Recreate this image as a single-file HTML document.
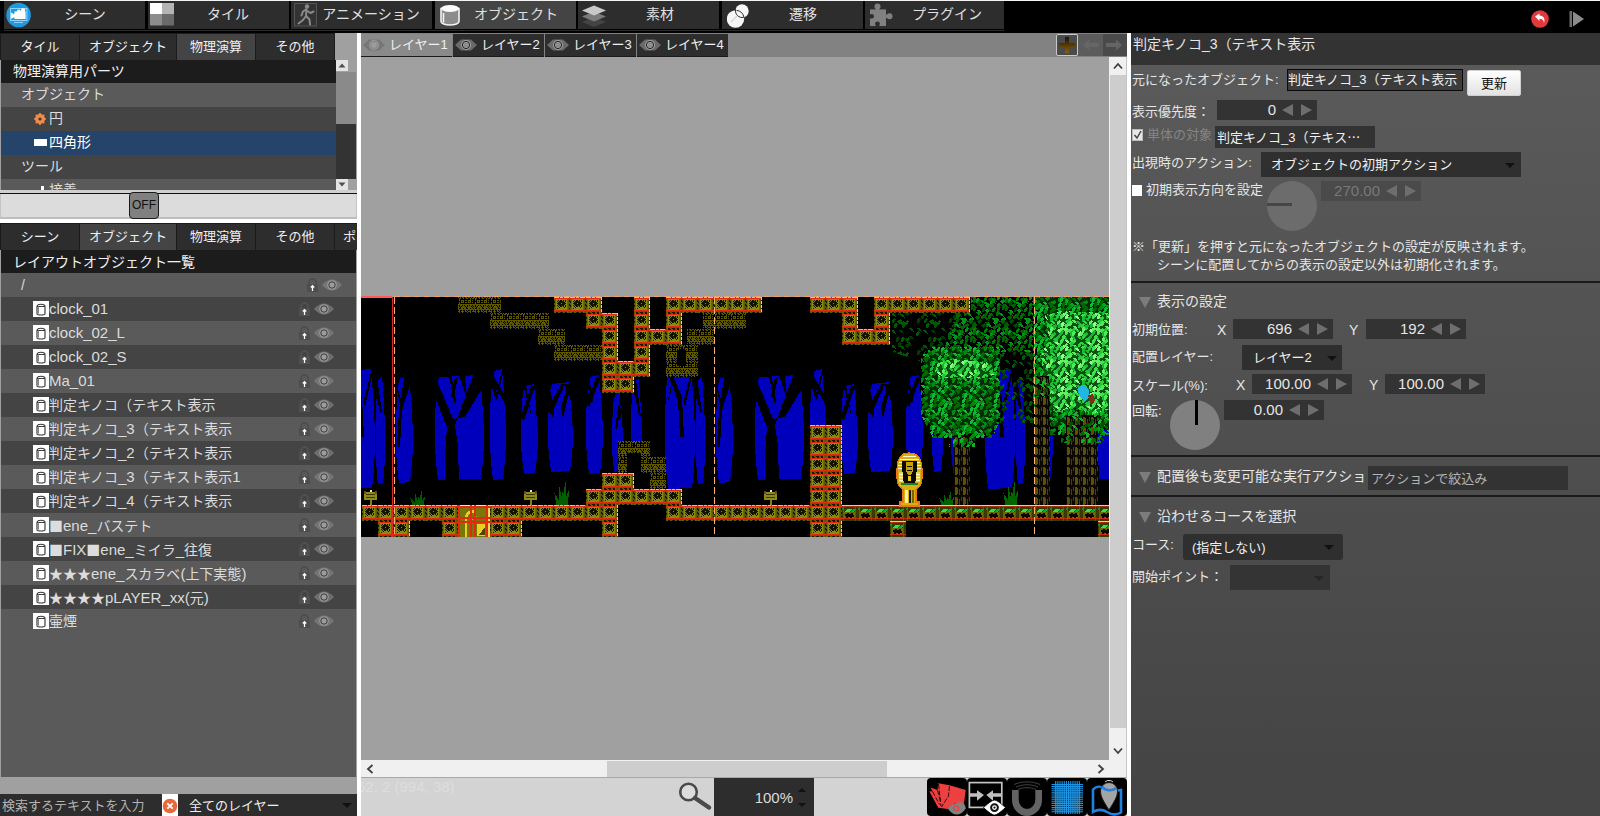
<!DOCTYPE html>
<html lang="ja"><head><meta charset="utf-8"><title>Scene Editor</title>
<style>
*{box-sizing:border-box;margin:0;padding:0}
html,body{width:1600px;height:816px;overflow:hidden;background:#000}
body{position:relative;font-family:"Liberation Sans","Noto Sans CJK JP",sans-serif;font-size:13px;color:#e6e6e6;line-height:1}
.a{position:absolute}
.t{position:absolute;white-space:nowrap;line-height:20px;height:20px}
/* top bar */
.tt{position:absolute;top:1px;height:28px;width:141px;background:#2d2d2d;font-size:14px;line-height:27px;color:#e0e0e0}
.tt.sel{background:#444}
.tt span{position:absolute;top:0;white-space:nowrap;transform:translateX(-50%)}
.tt svg{position:absolute}
/* sub tabs */
.st{position:absolute;height:26px;background:#2d2d2d;font-size:13px;line-height:25px;text-align:center;color:#f0f0f0;border-right:1px solid #1c1c1c;white-space:nowrap;overflow:hidden}
.st.sel{background:#444}
.row{position:absolute;left:1px;width:355px;height:24px;font-size:14px;line-height:24px;color:#dcdcdc;white-space:nowrap;overflow:hidden}
.r0{background:#5a5a5a}.r1{background:#444}
.row .ic{position:absolute;left:32px;top:4px;width:16px;height:16px;background:#fff}
.row .nm{position:absolute;left:48px;top:0}
.row .nm b{font-weight:normal;font-size:15px}
.row .nm s,.cj{text-decoration:none;font-family:"Noto Sans CJK JP",sans-serif}
.lk{position:absolute;top:5px;width:11px;height:14px}
.ey{position:absolute;top:6px;width:20px;height:12px}
.sp{position:absolute;height:20px;width:100px;background:#333;font-size:15px;line-height:20px;color:#e6e6e6}
.sp i{position:absolute;right:41px;top:0;font-style:normal}
.sp b{position:absolute;top:4px;width:0;height:0;border-top:6px solid transparent;border-bottom:6px solid transparent}
.sp b.l{right:24px;border-right:11px solid #6e6e6e}
.sp b.r{right:5px;border-left:11px solid #6e6e6e}
.dd{position:absolute;background:#2f2f2f;color:#f0f0f0;font-size:13px;white-space:nowrap}
.dd u{position:absolute;right:7px;top:50%;margin-top:-2px;width:0;height:0;border-left:5px solid transparent;border-right:5px solid transparent;border-top:5px solid #111}
.hl{position:absolute;left:1131px;width:469px;height:2px;background:#1a1a1a}
.sec{position:absolute;left:1157px;font-size:14px;line-height:20px;height:20px;white-space:nowrap;color:#e6e6e6}
.tri{position:absolute;left:1139px;width:0;height:0;border-left:6.5px solid transparent;border-right:6.5px solid transparent;border-top:11px solid #7c7c7c}
.ltab{position:absolute;top:34px;height:23px;width:91px;background:#2d2d2d;font-size:13px;line-height:21px;color:#f0f0f0;border-bottom:1px solid #1a1a1a}
.ltab.sel{background:#8a8a8a}
.ltab span{position:absolute;left:28px;top:0;white-space:nowrap}
.ltab svg{position:absolute;left:2px;top:4px}
.bb{position:absolute;top:778px;height:38px;width:40px;background:#000;border-radius:4px}
</style></head><body>
<div class="a" style="left:0;top:0;width:1600px;height:33px;background:#000"></div>
<div class="a" style="left:4px;top:30px;width:1000px;height:1px;background:#2a2a2a"></div>
<div class="a" style="left:0;top:0;width:1600px;height:1px;background:#f4f4f4"></div>
<div class="tt" style="left:4px"><svg width="26" height="26" style="left:2px;top:1px" viewBox="0 0 26 26"><circle cx="12.600" cy="13" r="12.300" fill="#1e9be0"/><rect x="4.600" y="6.500" width="16.300" height="12" fill="none" stroke="#8fd4ff" stroke-width="1"/><path d="M8 20.500h9" stroke="#8fd4ff" stroke-width="1"/><path d="M8.400 9.500h11.200v7.500h-11.200zM4.800 10.500l3.900 2v2.500l-3.900 2z" fill="#fff"/><circle cx="12.800" cy="9.300" r="1.900" fill="#fff"/><circle cx="17" cy="8.500" r="2.200" fill="#fff"/></svg><span style="left:81px">シーン</span></div>
<div class="tt" style="left:148px"><svg width="24" height="23" style="left:2px;top:2px" viewBox="0 0 24 23"><rect x="0" y="0" width="12" height="11" fill="#fff"/><rect x="12" y="0" width="12" height="11" fill="#b4b4b4"/><rect x="0" y="11" width="12" height="11.500" fill="#8c8c8c"/><rect x="12" y="11" width="12" height="11.500" fill="#6a6a6a"/></svg><span style="left:80px">タイル</span></div>
<div class="tt" style="left:291px"><svg width="24" height="24" style="left:3px;top:2px" viewBox="0 0 24 24"><rect x="0.500" y="0.500" width="22" height="22.500" fill="#333" stroke="#555" stroke-width="1"/><circle cx="13" cy="3.500" r="2.200" fill="#8a8a8a"/><path d="M12.500 6l-3.500 2.500-1.500 4M12.500 6.500l-.5 6.500 3.500 3.500.5 5M12 13l-3 4-4.500 3.500M12.500 7.500l4 2.500 3-1.500" fill="none" stroke="#8a8a8a" stroke-width="2" stroke-linecap="round" stroke-linejoin="round"/></svg><span style="left:80px">アニメーション</span></div>
<div class="tt sel" style="left:435px"><svg width="20" height="22" style="left:5px;top:3px" viewBox="0 0 20 22"><path d="M1 4.500v13c0 2 4 3.500 9 3.500s9-1.500 9-3.500v-13z" fill="#8c8c8c" stroke="#f4f4f4" stroke-width="1.600"/><ellipse cx="10" cy="4.500" rx="9" ry="3.500" fill="#fafafa"/><path d="M3.500 9v9.500" stroke="#f4f4f4" stroke-width="1.500"/></svg><span style="left:81px">オブジェクト</span></div>
<div class="tt" style="left:578px"><svg width="26" height="24" style="left:3px;top:3px" viewBox="0 0 26 24"><path d="M13 13l12 5-12 5L1 18z" fill="#444"/><path d="M13 7.500l12 5-12 5L1 12.500z" fill="#7a7a7a"/><path d="M13 1.500l12 5-12 5L1 6.500z" fill="#c8c8c8"/></svg><span style="left:82px">素材</span></div>
<div class="tt" style="left:722px"><svg width="28" height="26" style="left:5px;top:2px" viewBox="0 0 28 26"><circle cx="8.500" cy="16" r="8.700" fill="#f6f6f6"/><circle cx="15" cy="8" r="6.700" fill="#f6f6f6"/><path d="M8.600 6.500a6.700 6.700 0 0 0 8.200 7.800M9.500 7.400a8.700 8.700 0 0 1 7.500 7" fill="none" stroke="#2a2a2a" stroke-width="1"/><path d="M4 19l6-6" stroke="#d8d8d8" stroke-width="1.500"/></svg><span style="left:81px">遷移</span></div>
<div class="tt" style="left:865px;width:139px"><svg width="27" height="26" style="left:3px;top:1px" viewBox="0 0 27 26"><rect x="2" y="7.400" width="16" height="16.600" fill="#808080"/><circle cx="9.500" cy="4.500" r="3" fill="#808080"/><rect x="8" y="5" width="3" height="3" fill="#808080"/><circle cx="21.500" cy="14.300" r="3" fill="#808080"/><rect x="17" y="12.800" width="3" height="3" fill="#808080"/><circle cx="3.600" cy="14.300" r="2.400" fill="#2d2d2d"/><circle cx="9.500" cy="22" r="2.400" fill="#2d2d2d"/><rect x="8.300" y="22.500" width="2.400" height="2" fill="#2d2d2d"/><rect x="1.500" y="13.200" width="1.500" height="2.200" fill="#2d2d2d"/></svg><span style="left:82px">プラグイン</span></div>
<svg class="a" style="left:1530px;top:9px" width="20" height="20" viewBox="0 0 20 20"><circle cx="10" cy="10" r="8.800" fill="#e23a3a"/><path d="M5 7.500l4.500-3v2c4 .3 6 3 4.500 7.500-.3-3-1.800-4.300-4.500-4.300v2.300z" fill="#fff"/></svg>
<svg class="a" style="left:1568px;top:9px" width="18" height="20" viewBox="0 0 18 20"><rect x="1.500" y="2" width="2.500" height="16" fill="#6e6e6e"/><path d="M5 2.500l11 7.500-11 7.500z" fill="#8c8c8c"/></svg>
<div class="a" style="left:0;top:33px;width:357px;height:783px;background:#a0a0a0"></div>
<div class="a" style="left:0;top:33px;width:335px;height:27px;background:#1c1c1c"></div>
<div class="st" style="left:1px;top:34px;width:79px;height:26px">タイル</div>
<div class="st" style="left:80px;top:34px;width:97px;height:26px">オブジェクト</div>
<div class="st sel" style="left:177px;top:34px;width:79px;height:26px">物理演算</div>
<div class="st" style="left:256px;top:34px;width:79px;height:26px">その他</div>
<div class="a" style="left:1px;top:60px;width:335px;line-height:23px;height:130px;overflow:hidden;background:#5a5a5a">
<div class="row" style="left:0;top:0;width:335px;line-height:23px;background:#1c1c1c;color:#f0f0f0"><span class="a" style="left:12px">物理演算用パーツ</span></div>
<div class="row r0" style="left:0;top:23px;width:335px;line-height:23px"><span class="a" style="left:20px">オブジェクト</span></div>
<div class="row r1" style="left:0;top:47px;width:335px;line-height:23px"><svg class="a" style="left:33px;top:6px" width="12" height="12" viewBox="0 0 12 12"><circle cx="6" cy="6" r="5" fill="#f08c46"/><path d="M6 0v12M0 6h12M1.800 1.800l8.400 8.400M10.200 1.800l-8.400 8.400" stroke="#f08c46" stroke-width="1.600"/><circle cx="6" cy="6" r="1.600" fill="#3a3a3a"/></svg><span class="a" style="left:48px">円</span></div>
<div class="row" style="left:0;top:71px;width:335px;line-height:23px;background:#24446a;color:#fff"><i class="a" style="left:33px;top:8px;width:13px;height:7px;background:#fff"></i><span class="a" style="left:48px">四角形</span></div>
<div class="row r1" style="left:0;top:95px;width:335px;line-height:23px"><span class="a" style="left:20px">ツール</span></div>
<div class="row r0" style="left:0;top:119px;width:335px;line-height:23px"><i class="a" style="left:40px;top:7px;width:3px;height:4px;background:#fff"></i><span class="a" style="left:48px">接着</span></div>
</div>
<div class="a" style="left:336px;top:60px;width:20px;height:130px;background:#333"></div>
<div class="a" style="left:336px;top:60px;width:20px;height:12px;background:#a0a0a0"></div>
<div class="a" style="left:336px;top:72px;width:20px;height:52px;background:#8a8a8a"></div>
<div class="a" style="left:336px;top:179px;width:20px;height:11px;background:#a0a0a0"></div>
<svg class="a" style="left:336px;top:60px" width="12" height="11" viewBox="0 0 12 11"><rect width="12" height="11" fill="#e4e4e4"/><path d="M2.500 7.500h7L6 3.500z" fill="#505050"/></svg>
<svg class="a" style="left:336px;top:179px" width="12" height="11" viewBox="0 0 12 11"><rect width="12" height="11" fill="#e4e4e4"/><path d="M2.500 3.500h7L6 7.500z" fill="#505050"/></svg>
<div class="a" style="left:0;top:190px;width:357px;height:3px;background:#cfcfcf"></div>
<div class="a" style="left:0;top:193px;width:357px;height:1px;background:#111"></div>
<div class="a" style="left:0;top:194px;width:357px;height:25px;background:#dcdcdc;border:1px solid #c4c4c4;border-top:0;border-bottom:2px solid #bdbdbd"></div>
<div class="a" style="left:129px;top:192px;width:30px;height:27px;background:#808080;border:1px solid #1a1a1a;border-radius:4px;color:#111;font-size:12px;line-height:25px;text-align:center">OFF</div>
<div class="a" style="left:0;top:219px;width:357px;height:4px;background:#fff"></div>
<div class="a" style="left:0;top:223px;width:357px;height:27px;background:#1c1c1c"></div>
<div class="st" style="left:1px;top:224px;width:79px;height:26px">シーン</div>
<div class="st sel" style="left:80px;top:224px;width:97px;height:26px">オブジェクト</div>
<div class="st" style="left:177px;top:224px;width:79px;height:26px">物理演算</div>
<div class="st" style="left:256px;top:224px;width:79px;height:26px">その他</div>
<div class="st" style="left:335px;top:224px;width:22px;height:26px;text-align:left;padding-left:8px;border-right:0">ポ</div>
<div class="a" style="left:1px;top:250px;width:355px;height:527px;background:#5a5a5a"></div>
<div class="row" style="top:250px;height:23px;background:#1c1c1c;color:#f0f0f0"><span class="a" style="left:12px">レイアウトオブジェクト一覧</span></div>
<div class="row r0" style="top:273px"><span class="a" style="left:20px">/</span><svg class="lk" style="left:306px" viewBox="0 0 11 14"><path d="M2 6V4.500a3.500 3.500 0 0 1 7 0v1" fill="none" stroke="#4e4e4e" stroke-width="2"/><rect x="0" y="6" width="11" height="8" fill="#4e4e4e"/><path d="M5.500 13V8M3.800 9.500l1.700-1.800 1.700 1.800" stroke="#fff" stroke-width="1.300" fill="none"/></svg><svg class="ey" style="left:321px" viewBox="0 0 20 12"><path d="M0 6Q5 0.500 10 0.500T20 6Q15 11.500 10 11.500T0 6z" fill="#767676"/><circle cx="10" cy="6" r="4.800" fill="#9a9a9a"/><circle cx="10" cy="6" r="3.200" fill="none" stroke="#303030" stroke-width=".9"/><rect x="8.200" y="4.200" width="3.600" height="3.600" fill="#9c9c9c"/></svg></div>
<div class="row r1" style="top:297px"><svg class="ic" viewBox="0 0 16 16"><rect width="16" height="16" fill="#fff"/><path d="M4 5.500c0-3 8-3 8 0M3.500 5.500h9M4 6v6.500c0 2 8 2 8 0V6" fill="none" stroke="#3c3c3c" stroke-width="1.200"/><path d="M5.500 5.500v7" stroke="#888" stroke-width="1"/></svg><span class="nm"><b>clock_01</b></span><svg class="lk" style="left:298px" viewBox="0 0 11 14"><path d="M2 6V4.500a3.500 3.500 0 0 1 7 0v1" fill="none" stroke="#505050" stroke-width="2"/><rect x="0" y="6" width="11" height="8" fill="#505050"/><path d="M5.500 13V8M3.800 9.500l1.700-1.800 1.700 1.800" stroke="#fff" stroke-width="1.300" fill="none"/></svg><svg class="ey" style="left:313px" viewBox="0 0 20 12"><path d="M0 6Q5 0.500 10 0.500T20 6Q15 11.500 10 11.500T0 6z" fill="#6e6e6e"/><circle cx="10" cy="6" r="4.800" fill="#989898"/><circle cx="10" cy="6" r="3.200" fill="none" stroke="#303030" stroke-width=".9"/><rect x="8.200" y="4.200" width="3.600" height="3.600" fill="#9c9c9c"/></svg></div>
<div class="row r0" style="top:321px"><svg class="ic" viewBox="0 0 16 16"><rect width="16" height="16" fill="#fff"/><path d="M4 5.500c0-3 8-3 8 0M3.500 5.500h9M4 6v6.500c0 2 8 2 8 0V6" fill="none" stroke="#3c3c3c" stroke-width="1.200"/><path d="M5.500 5.500v7" stroke="#888" stroke-width="1"/></svg><span class="nm"><b>clock_02_L</b></span><svg class="lk" style="left:298px" viewBox="0 0 11 14"><path d="M2 6V4.500a3.500 3.500 0 0 1 7 0v1" fill="none" stroke="#4e4e4e" stroke-width="2"/><rect x="0" y="6" width="11" height="8" fill="#4e4e4e"/><path d="M5.500 13V8M3.800 9.500l1.700-1.800 1.700 1.800" stroke="#fff" stroke-width="1.300" fill="none"/></svg><svg class="ey" style="left:313px" viewBox="0 0 20 12"><path d="M0 6Q5 0.500 10 0.500T20 6Q15 11.500 10 11.500T0 6z" fill="#767676"/><circle cx="10" cy="6" r="4.800" fill="#989898"/><circle cx="10" cy="6" r="3.200" fill="none" stroke="#303030" stroke-width=".9"/><rect x="8.200" y="4.200" width="3.600" height="3.600" fill="#9c9c9c"/></svg></div>
<div class="row r1" style="top:345px"><svg class="ic" viewBox="0 0 16 16"><rect width="16" height="16" fill="#fff"/><path d="M4 5.500c0-3 8-3 8 0M3.500 5.500h9M4 6v6.500c0 2 8 2 8 0V6" fill="none" stroke="#3c3c3c" stroke-width="1.200"/><path d="M5.500 5.500v7" stroke="#888" stroke-width="1"/></svg><span class="nm"><b>clock_02_S</b></span><svg class="lk" style="left:298px" viewBox="0 0 11 14"><path d="M2 6V4.500a3.500 3.500 0 0 1 7 0v1" fill="none" stroke="#505050" stroke-width="2"/><rect x="0" y="6" width="11" height="8" fill="#505050"/><path d="M5.500 13V8M3.800 9.500l1.700-1.800 1.700 1.800" stroke="#fff" stroke-width="1.300" fill="none"/></svg><svg class="ey" style="left:313px" viewBox="0 0 20 12"><path d="M0 6Q5 0.500 10 0.500T20 6Q15 11.500 10 11.500T0 6z" fill="#6e6e6e"/><circle cx="10" cy="6" r="4.800" fill="#989898"/><circle cx="10" cy="6" r="3.200" fill="none" stroke="#303030" stroke-width=".9"/><rect x="8.200" y="4.200" width="3.600" height="3.600" fill="#9c9c9c"/></svg></div>
<div class="row r0" style="top:369px"><svg class="ic" viewBox="0 0 16 16"><rect width="16" height="16" fill="#fff"/><path d="M4 5.500c0-3 8-3 8 0M3.500 5.500h9M4 6v6.500c0 2 8 2 8 0V6" fill="none" stroke="#3c3c3c" stroke-width="1.200"/><path d="M5.500 5.500v7" stroke="#888" stroke-width="1"/></svg><span class="nm"><b>Ma_01</b></span><svg class="lk" style="left:298px" viewBox="0 0 11 14"><path d="M2 6V4.500a3.500 3.500 0 0 1 7 0v1" fill="none" stroke="#4e4e4e" stroke-width="2"/><rect x="0" y="6" width="11" height="8" fill="#4e4e4e"/><path d="M5.500 13V8M3.800 9.500l1.700-1.800 1.700 1.800" stroke="#fff" stroke-width="1.300" fill="none"/></svg><svg class="ey" style="left:313px" viewBox="0 0 20 12"><path d="M0 6Q5 0.500 10 0.500T20 6Q15 11.500 10 11.500T0 6z" fill="#767676"/><circle cx="10" cy="6" r="4.800" fill="#989898"/><circle cx="10" cy="6" r="3.200" fill="none" stroke="#303030" stroke-width=".9"/><rect x="8.200" y="4.200" width="3.600" height="3.600" fill="#9c9c9c"/></svg></div>
<div class="row r1" style="top:393px"><svg class="ic" viewBox="0 0 16 16"><rect width="16" height="16" fill="#fff"/><path d="M4 5.500c0-3 8-3 8 0M3.500 5.500h9M4 6v6.500c0 2 8 2 8 0V6" fill="none" stroke="#3c3c3c" stroke-width="1.200"/><path d="M5.500 5.500v7" stroke="#888" stroke-width="1"/></svg><span class="nm">判定キノコ（テキスト表示</span><svg class="lk" style="left:298px" viewBox="0 0 11 14"><path d="M2 6V4.500a3.500 3.500 0 0 1 7 0v1" fill="none" stroke="#505050" stroke-width="2"/><rect x="0" y="6" width="11" height="8" fill="#505050"/><path d="M5.500 13V8M3.800 9.500l1.700-1.800 1.700 1.800" stroke="#fff" stroke-width="1.300" fill="none"/></svg><svg class="ey" style="left:313px" viewBox="0 0 20 12"><path d="M0 6Q5 0.500 10 0.500T20 6Q15 11.500 10 11.500T0 6z" fill="#6e6e6e"/><circle cx="10" cy="6" r="4.800" fill="#989898"/><circle cx="10" cy="6" r="3.200" fill="none" stroke="#303030" stroke-width=".9"/><rect x="8.200" y="4.200" width="3.600" height="3.600" fill="#9c9c9c"/></svg></div>
<div class="row r0" style="top:417px"><svg class="ic" viewBox="0 0 16 16"><rect width="16" height="16" fill="#fff"/><path d="M4 5.500c0-3 8-3 8 0M3.500 5.500h9M4 6v6.500c0 2 8 2 8 0V6" fill="none" stroke="#3c3c3c" stroke-width="1.200"/><path d="M5.500 5.500v7" stroke="#888" stroke-width="1"/></svg><span class="nm">判定キノコ<b>_3</b>（テキスト表示</span><svg class="lk" style="left:298px" viewBox="0 0 11 14"><path d="M2 6V4.500a3.500 3.500 0 0 1 7 0v1" fill="none" stroke="#4e4e4e" stroke-width="2"/><rect x="0" y="6" width="11" height="8" fill="#4e4e4e"/><path d="M5.500 13V8M3.800 9.500l1.700-1.800 1.700 1.800" stroke="#fff" stroke-width="1.300" fill="none"/></svg><svg class="ey" style="left:313px" viewBox="0 0 20 12"><path d="M0 6Q5 0.500 10 0.500T20 6Q15 11.500 10 11.500T0 6z" fill="#767676"/><circle cx="10" cy="6" r="4.800" fill="#989898"/><circle cx="10" cy="6" r="3.200" fill="none" stroke="#303030" stroke-width=".9"/><rect x="8.200" y="4.200" width="3.600" height="3.600" fill="#9c9c9c"/></svg></div>
<div class="row r1" style="top:441px"><svg class="ic" viewBox="0 0 16 16"><rect width="16" height="16" fill="#fff"/><path d="M4 5.500c0-3 8-3 8 0M3.500 5.500h9M4 6v6.500c0 2 8 2 8 0V6" fill="none" stroke="#3c3c3c" stroke-width="1.200"/><path d="M5.500 5.500v7" stroke="#888" stroke-width="1"/></svg><span class="nm">判定キノコ<b>_2</b>（テキスト表示</span><svg class="lk" style="left:298px" viewBox="0 0 11 14"><path d="M2 6V4.500a3.500 3.500 0 0 1 7 0v1" fill="none" stroke="#505050" stroke-width="2"/><rect x="0" y="6" width="11" height="8" fill="#505050"/><path d="M5.500 13V8M3.800 9.500l1.700-1.800 1.700 1.800" stroke="#fff" stroke-width="1.300" fill="none"/></svg><svg class="ey" style="left:313px" viewBox="0 0 20 12"><path d="M0 6Q5 0.500 10 0.500T20 6Q15 11.500 10 11.500T0 6z" fill="#6e6e6e"/><circle cx="10" cy="6" r="4.800" fill="#989898"/><circle cx="10" cy="6" r="3.200" fill="none" stroke="#303030" stroke-width=".9"/><rect x="8.200" y="4.200" width="3.600" height="3.600" fill="#9c9c9c"/></svg></div>
<div class="row r0" style="top:465px"><svg class="ic" viewBox="0 0 16 16"><rect width="16" height="16" fill="#fff"/><path d="M4 5.500c0-3 8-3 8 0M3.500 5.500h9M4 6v6.500c0 2 8 2 8 0V6" fill="none" stroke="#3c3c3c" stroke-width="1.200"/><path d="M5.500 5.500v7" stroke="#888" stroke-width="1"/></svg><span class="nm">判定キノコ<b>_3</b>（テキスト表示<b>1</b></span><svg class="lk" style="left:298px" viewBox="0 0 11 14"><path d="M2 6V4.500a3.500 3.500 0 0 1 7 0v1" fill="none" stroke="#4e4e4e" stroke-width="2"/><rect x="0" y="6" width="11" height="8" fill="#4e4e4e"/><path d="M5.500 13V8M3.800 9.500l1.700-1.800 1.700 1.800" stroke="#fff" stroke-width="1.300" fill="none"/></svg><svg class="ey" style="left:313px" viewBox="0 0 20 12"><path d="M0 6Q5 0.500 10 0.500T20 6Q15 11.500 10 11.500T0 6z" fill="#767676"/><circle cx="10" cy="6" r="4.800" fill="#989898"/><circle cx="10" cy="6" r="3.200" fill="none" stroke="#303030" stroke-width=".9"/><rect x="8.200" y="4.200" width="3.600" height="3.600" fill="#9c9c9c"/></svg></div>
<div class="row r1" style="top:489px"><svg class="ic" viewBox="0 0 16 16"><rect width="16" height="16" fill="#fff"/><path d="M4 5.500c0-3 8-3 8 0M3.500 5.500h9M4 6v6.500c0 2 8 2 8 0V6" fill="none" stroke="#3c3c3c" stroke-width="1.200"/><path d="M5.500 5.500v7" stroke="#888" stroke-width="1"/></svg><span class="nm">判定キノコ<b>_4</b>（テキスト表示</span><svg class="lk" style="left:298px" viewBox="0 0 11 14"><path d="M2 6V4.500a3.500 3.500 0 0 1 7 0v1" fill="none" stroke="#505050" stroke-width="2"/><rect x="0" y="6" width="11" height="8" fill="#505050"/><path d="M5.500 13V8M3.800 9.500l1.700-1.800 1.700 1.800" stroke="#fff" stroke-width="1.300" fill="none"/></svg><svg class="ey" style="left:313px" viewBox="0 0 20 12"><path d="M0 6Q5 0.500 10 0.500T20 6Q15 11.500 10 11.500T0 6z" fill="#6e6e6e"/><circle cx="10" cy="6" r="4.800" fill="#989898"/><circle cx="10" cy="6" r="3.200" fill="none" stroke="#303030" stroke-width=".9"/><rect x="8.200" y="4.200" width="3.600" height="3.600" fill="#9c9c9c"/></svg></div>
<div class="row r0" style="top:513px"><svg class="ic" viewBox="0 0 16 16"><rect width="16" height="16" fill="#fff"/><path d="M4 5.500c0-3 8-3 8 0M3.500 5.500h9M4 6v6.500c0 2 8 2 8 0V6" fill="none" stroke="#3c3c3c" stroke-width="1.200"/><path d="M5.500 5.500v7" stroke="#888" stroke-width="1"/></svg><span class="nm"><s>■</s><b>ene_</b>バステト</span><svg class="lk" style="left:298px" viewBox="0 0 11 14"><path d="M2 6V4.500a3.500 3.500 0 0 1 7 0v1" fill="none" stroke="#4e4e4e" stroke-width="2"/><rect x="0" y="6" width="11" height="8" fill="#4e4e4e"/><path d="M5.500 13V8M3.800 9.500l1.700-1.800 1.700 1.800" stroke="#fff" stroke-width="1.300" fill="none"/></svg><svg class="ey" style="left:313px" viewBox="0 0 20 12"><path d="M0 6Q5 0.500 10 0.500T20 6Q15 11.500 10 11.500T0 6z" fill="#767676"/><circle cx="10" cy="6" r="4.800" fill="#989898"/><circle cx="10" cy="6" r="3.200" fill="none" stroke="#303030" stroke-width=".9"/><rect x="8.200" y="4.200" width="3.600" height="3.600" fill="#9c9c9c"/></svg></div>
<div class="row r1" style="top:537px"><svg class="ic" viewBox="0 0 16 16"><rect width="16" height="16" fill="#fff"/><path d="M4 5.500c0-3 8-3 8 0M3.500 5.500h9M4 6v6.500c0 2 8 2 8 0V6" fill="none" stroke="#3c3c3c" stroke-width="1.200"/><path d="M5.500 5.500v7" stroke="#888" stroke-width="1"/></svg><span class="nm"><s>■</s><b>FIX</b><s>■</s><b>ene_</b>ミイラ<b>_</b>往復</span><svg class="lk" style="left:298px" viewBox="0 0 11 14"><path d="M2 6V4.500a3.500 3.500 0 0 1 7 0v1" fill="none" stroke="#505050" stroke-width="2"/><rect x="0" y="6" width="11" height="8" fill="#505050"/><path d="M5.500 13V8M3.800 9.500l1.700-1.800 1.700 1.800" stroke="#fff" stroke-width="1.300" fill="none"/></svg><svg class="ey" style="left:313px" viewBox="0 0 20 12"><path d="M0 6Q5 0.500 10 0.500T20 6Q15 11.500 10 11.500T0 6z" fill="#6e6e6e"/><circle cx="10" cy="6" r="4.800" fill="#989898"/><circle cx="10" cy="6" r="3.200" fill="none" stroke="#303030" stroke-width=".9"/><rect x="8.200" y="4.200" width="3.600" height="3.600" fill="#9c9c9c"/></svg></div>
<div class="row r0" style="top:561px"><svg class="ic" viewBox="0 0 16 16"><rect width="16" height="16" fill="#fff"/><path d="M4 5.500c0-3 8-3 8 0M3.500 5.500h9M4 6v6.500c0 2 8 2 8 0V6" fill="none" stroke="#3c3c3c" stroke-width="1.200"/><path d="M5.500 5.500v7" stroke="#888" stroke-width="1"/></svg><span class="nm"><s>★</s><s>★</s><s>★</s><b>ene_</b>スカラベ<b>(</b>上下実態<b>)</b></span><svg class="lk" style="left:298px" viewBox="0 0 11 14"><path d="M2 6V4.500a3.500 3.500 0 0 1 7 0v1" fill="none" stroke="#4e4e4e" stroke-width="2"/><rect x="0" y="6" width="11" height="8" fill="#4e4e4e"/><path d="M5.500 13V8M3.800 9.500l1.700-1.800 1.700 1.800" stroke="#fff" stroke-width="1.300" fill="none"/></svg><svg class="ey" style="left:313px" viewBox="0 0 20 12"><path d="M0 6Q5 0.500 10 0.500T20 6Q15 11.500 10 11.500T0 6z" fill="#767676"/><circle cx="10" cy="6" r="4.800" fill="#989898"/><circle cx="10" cy="6" r="3.200" fill="none" stroke="#303030" stroke-width=".9"/><rect x="8.200" y="4.200" width="3.600" height="3.600" fill="#9c9c9c"/></svg></div>
<div class="row r1" style="top:585px"><svg class="ic" viewBox="0 0 16 16"><rect width="16" height="16" fill="#fff"/><path d="M4 5.500c0-3 8-3 8 0M3.500 5.500h9M4 6v6.500c0 2 8 2 8 0V6" fill="none" stroke="#3c3c3c" stroke-width="1.200"/><path d="M5.500 5.500v7" stroke="#888" stroke-width="1"/></svg><span class="nm"><s>★</s><s>★</s><s>★</s><s>★</s><b>pLAYER_xx(</b>元<b>)</b></span><svg class="lk" style="left:298px" viewBox="0 0 11 14"><path d="M2 6V4.500a3.500 3.500 0 0 1 7 0v1" fill="none" stroke="#505050" stroke-width="2"/><rect x="0" y="6" width="11" height="8" fill="#505050"/><path d="M5.500 13V8M3.800 9.500l1.700-1.800 1.700 1.800" stroke="#fff" stroke-width="1.300" fill="none"/></svg><svg class="ey" style="left:313px" viewBox="0 0 20 12"><path d="M0 6Q5 0.500 10 0.500T20 6Q15 11.500 10 11.500T0 6z" fill="#6e6e6e"/><circle cx="10" cy="6" r="4.800" fill="#989898"/><circle cx="10" cy="6" r="3.200" fill="none" stroke="#303030" stroke-width=".9"/><rect x="8.200" y="4.200" width="3.600" height="3.600" fill="#9c9c9c"/></svg></div>
<div class="row r0" style="top:609px"><svg class="ic" viewBox="0 0 16 16"><rect width="16" height="16" fill="#fff"/><path d="M4 5.500c0-3 8-3 8 0M3.500 5.500h9M4 6v6.500c0 2 8 2 8 0V6" fill="none" stroke="#3c3c3c" stroke-width="1.200"/><path d="M5.500 5.500v7" stroke="#888" stroke-width="1"/></svg><span class="nm">壷煙</span><svg class="lk" style="left:298px" viewBox="0 0 11 14"><path d="M2 6V4.500a3.500 3.500 0 0 1 7 0v1" fill="none" stroke="#4e4e4e" stroke-width="2"/><rect x="0" y="6" width="11" height="8" fill="#4e4e4e"/><path d="M5.500 13V8M3.800 9.500l1.700-1.800 1.700 1.800" stroke="#fff" stroke-width="1.300" fill="none"/></svg><svg class="ey" style="left:313px" viewBox="0 0 20 12"><path d="M0 6Q5 0.500 10 0.500T20 6Q15 11.500 10 11.500T0 6z" fill="#767676"/><circle cx="10" cy="6" r="4.800" fill="#989898"/><circle cx="10" cy="6" r="3.200" fill="none" stroke="#303030" stroke-width=".9"/><rect x="8.200" y="4.200" width="3.600" height="3.600" fill="#9c9c9c"/></svg></div>
<div class="a" style="left:0;top:794px;width:162px;height:22px;background:#2d2d2d;color:#b4b4b4;font-size:13px;line-height:23px;padding-left:2px;white-space:nowrap;overflow:hidden">検索するテキストを入力</div>
<div class="a" style="left:162px;top:794px;width:16px;height:22px;background:#fff"></div>
<svg class="a" style="left:162px;top:798px" width="16" height="16" viewBox="0 0 16 16"><circle cx="8" cy="8" r="7.300" fill="#e8673c"/><path d="M5.300 5.300l5.400 5.400M10.700 5.300l-5.400 5.400" stroke="#fff" stroke-width="1.800"/></svg>
<div class="dd" style="left:178px;top:794px;width:179px;height:22px;line-height:23px;padding-left:11px;background:#2d2d2d">全てのレイヤー<u style="right:5px"></u></div>
<div class="a" style="left:357px;top:33px;width:4px;height:783px;background:#fff"></div>
<div class="a" style="left:1127px;top:33px;width:4px;height:783px;background:#fff"></div><div class="a" style="left:361px;top:33px;width:766px;height:24px;background:#828282"></div>
<div class="a" style="left:361px;top:57px;width:748px;height:703px;background:#a0a0a0"></div>
<div class="ltab sel" style="left:361px"><svg width="22" height="14" viewBox="0 0 22 14"><path d="M0 7L6 1.500h10L22 7l-6 5.500H6z" fill="#767676"/><circle cx="11" cy="7" r="5" fill="#9a9a9a"/><circle cx="11" cy="7" r="3.600" fill="none" stroke="#868686" stroke-width="1"/><circle cx="11" cy="7" r="2.300" fill="#9c9c9c"/></svg><span>レイヤー1</span></div>
<div class="ltab" style="left:453px"><svg width="22" height="14" viewBox="0 0 22 14"><path d="M0 7L6 1.500h10L22 7l-6 5.500H6z" fill="#6a6a6a"/><circle cx="11" cy="7" r="5" fill="#a0a0a0"/><circle cx="11" cy="7" r="3.600" fill="none" stroke="#1e1e1e" stroke-width="1"/><circle cx="11" cy="7" r="2.300" fill="#8c8c8c"/></svg><span>レイヤー2</span></div>
<div class="ltab" style="left:545px"><svg width="22" height="14" viewBox="0 0 22 14"><path d="M0 7L6 1.500h10L22 7l-6 5.500H6z" fill="#6a6a6a"/><circle cx="11" cy="7" r="5" fill="#a0a0a0"/><circle cx="11" cy="7" r="3.600" fill="none" stroke="#1e1e1e" stroke-width="1"/><circle cx="11" cy="7" r="2.300" fill="#8c8c8c"/></svg><span>レイヤー3</span></div>
<div class="ltab" style="left:637px"><svg width="22" height="14" viewBox="0 0 22 14"><path d="M0 7L6 1.500h10L22 7l-6 5.500H6z" fill="#6a6a6a"/><circle cx="11" cy="7" r="5" fill="#a0a0a0"/><circle cx="11" cy="7" r="3.600" fill="none" stroke="#1e1e1e" stroke-width="1"/><circle cx="11" cy="7" r="2.300" fill="#8c8c8c"/></svg><span>レイヤー4</span></div>
<div class="a" style="left:1056px;top:34px;width:22px;height:22px;background:#4a4a4a;border:1px solid #c8c8c8;border-radius:2px"></div>
<svg class="a" style="left:1059px;top:37px" width="16" height="16" viewBox="0 0 16 16"><defs><linearGradient id="pg" x1="0" y1="0" x2="0" y2="1"><stop offset="0" stop-color="#1e1200"/><stop offset="1" stop-color="#8a6208"/></linearGradient></defs><path d="M6 0h4v6h6v4h-6v6H6v-6H0V6h6z" fill="url(#pg)"/></svg>
<div class="a" style="left:1078px;top:34px;width:25px;height:22px;background:#5c5c5c"></div>
<div class="a" style="left:1103px;top:34px;width:24px;height:22px;background:#4a4a4a"></div>
<svg class="a" style="left:1083px;top:39px" width="16" height="12" viewBox="0 0 16 12"><path d="M0 6l6-5.500v3.500h10v4H6v3.500z" fill="#666"/></svg>
<svg class="a" style="left:1106px;top:39px" width="16" height="12" viewBox="0 0 16 12"><path d="M16 6l-6-5.500v3.500H0v4h10v3.500z" fill="#646464"/></svg>
<div class="a" style="left:1109px;top:57px;width:18px;height:721px;background:#f0f0f0"></div>
<div class="a" style="left:1110px;top:75px;width:16px;height:653px;background:#cdcdcd"></div>
<div class="a" style="left:1126px;top:57px;width:1px;height:721px;background:#c4c4c4"></div>
<svg class="a" style="left:1113px;top:62px" width="10" height="8" viewBox="0 0 10 8"><path d="M1 6.500l4-4.500 4 4.500" fill="none" stroke="#404040" stroke-width="1.800"/></svg>
<svg class="a" style="left:1113px;top:747px" width="10" height="8" viewBox="0 0 10 8"><path d="M1 1.500l4 4.500 4-4.500" fill="none" stroke="#404040" stroke-width="1.800"/></svg>
<div class="a" style="left:361px;top:760px;width:748px;height:17px;background:#f0f0f0"></div>
<div class="a" style="left:607px;top:761px;width:280px;height:16px;background:#cdcdcd"></div>
<svg class="a" style="left:366px;top:764px" width="8" height="10" viewBox="0 0 8 10"><path d="M6.500 1l-4.500 4 4.500 4" fill="none" stroke="#404040" stroke-width="1.800"/></svg>
<svg class="a" style="left:1097px;top:764px" width="8" height="10" viewBox="0 0 8 10"><path d="M1.500 1l4.500 4-4.500 4" fill="none" stroke="#404040" stroke-width="1.800"/></svg>
<div class="a" style="left:361px;top:777px;width:766px;height:1px;background:#a8a8a8"></div>
<div class="a" style="left:361px;top:778px;width:766px;height:38px;background:#d3d3d3;overflow:hidden"><span class="a" style="left:-4px;top:1px;font-size:15px;line-height:16px;color:#dedede;white-space:nowrap">62, 2 (994, 38)</span></div>
<svg class="a" style="left:676px;top:781px" width="38" height="30" viewBox="0 0 38 30"><circle cx="12.500" cy="11" r="8.300" fill="#dcdcdc" stroke="#4a4a4a" stroke-width="2.600"/><path d="M19 17l14 9.500" stroke="#4a4a4a" stroke-width="4.500" stroke-linecap="round"/></svg>
<div class="a" style="left:714px;top:778px;width:100px;height:38px;background:#2d2d2d;font-size:15px;line-height:40px;color:#dcdcdc"><span class="a" style="right:21px;top:0">100%</span><i class="a" style="right:8px;top:10px;border-left:4px solid transparent;border-right:4px solid transparent;border-bottom:4px solid #111"></i><i class="a" style="right:8px;top:25px;border-left:4px solid transparent;border-right:4px solid transparent;border-top:4px solid #111"></i></div>
<div class="bb" style="left:927px"></div>
<div class="bb" style="left:967px"></div>
<div class="bb" style="left:1007px"></div>
<div class="bb" style="left:1047px"></div>
<div class="bb" style="left:1087px"></div>
<svg class="a" style="left:928px;top:778px" width="39" height="38" viewBox="0 0 39 38"><path d="M10.200 5.300L21.500 7.300 37.700 11.900 35.700 27 27 25 20 31 10.200 29.800 1.300 13.200 4.500 13.500 2.600 9.600 9.500 12z" fill="#ee4040"/><path d="M10.500 6l2.500 22M21.500 8l-1 10-7 11M9.500 12l3 12M4.500 13.500l7 13" stroke="#000" stroke-width=".8" fill="none" stroke-dasharray="5 1.500"/><path d="M19.800 30.400q6.500-6.500 13.500-6 4 1 4.500 6-4 6-9 6-5 0-9-6z" fill="#828282"/><circle cx="28" cy="30.400" r="2.600" fill="none" stroke="#ee4040" stroke-width="1.200"/></svg>
<svg class="a" style="left:968px;top:778px" width="40" height="38" viewBox="0 0 40 38"><rect x="1.400" y="4.600" width="32.400" height="24.800" fill="none" stroke="#c4c4c4" stroke-width="1.700"/><path d="M1.400 15.200h7.600v-3l7 4.800-7 5.800v-4h-7.600zM33.800 15.200h-8.800v-3l-6.700 4.800 6.700 5.800v-4h8.800z" fill="#c0c0c0"/><path d="M15.500 29.600q8-7.500 11-7.500t11 7.500q-8 7.500-11 7.500t-11-7.500z" fill="#fff" stroke="#000" stroke-width=".8"/><circle cx="26.500" cy="29.600" r="3.400" fill="none" stroke="#111" stroke-width="2"/><circle cx="26.500" cy="29.600" r="1.100" fill="#111"/></svg>
<svg class="a" style="left:1009px;top:778px" width="38" height="38" viewBox="0 0 38 38"><path d="M3 12v10a15 16 0 0 0 30 0V12h-6.700v10a8.300 9 0 0 1-16.600 0V12z" fill="#636363"/><path d="M5 6.500c8-3.500 18-3.500 26 0M7 9c7-3 15-3 22 0M9 11.500c6-2.500 12-2.500 18 0" fill="none" stroke="#4a4a4a" stroke-width=".9"/></svg>
<svg class="a" style="left:1049px;top:778px" width="38" height="38" viewBox="0 0 38 38"><rect x="6" y="6" width="25" height="28" fill="#04283c"/><path d="M6.7 3v33M8.85 3v33M11 3v33M13.15 3v33M15.3 3v33M17.45 3v33M19.6 3v33M21.75 3v33M23.9 3v33M26.05 3v33M28.2 3v33M30.35 3v33M2.500 6.5h31.500M2.500 8.6h31.500M2.500 10.7h31.500M2.500 12.8h31.500M2.500 14.9h31.500M2.500 17h31.500M2.500 19.1h31.500M2.500 21.2h31.500M2.500 23.3h31.500M2.500 25.4h31.500M2.500 27.5h31.500M2.500 29.6h31.500M2.500 31.7h31.500M2.500 33.8h31.500" stroke="#1e96e6" stroke-width="1.100" fill="none"/></svg>
<svg class="a" style="left:1089px;top:778px" width="38" height="38" viewBox="0 0 38 38"><path d="M4 11.500c3-3.500 8-3.500 12-1s8 3 16 1.500v22.500c-5 3-10 2-14-.5s-9-3-14 0z" fill="none" stroke="#1e82e0" stroke-width="2.600"/><path d="M20 32c-5-8-8.500-13-8.500-19a8.500 8.500 0 0 1 17 0c0 6-3.500 11-8.500 19z" fill="#a4a4a4" stroke="#1a1a1a" stroke-width="1"/><path d="M13 8.500c3 4.500 10 5 14 1.500" fill="none" stroke="#1e82e0" stroke-width="2.600"/><path d="M16 4c2-2 6-2 8 0" fill="none" stroke="#ddd" stroke-width="1"/></svg><svg class="a" style="left:361px;top:296px" width="748" height="242" viewBox="0 -1 748 242" shape-rendering="crispEdges">
<defs>
<pattern id="tb" x="1" y="0" width="16" height="16" patternUnits="userSpaceOnUse"><rect width="16" height="16" fill="#5c5a08"/><rect x="2" y="2" width="11" height="11" fill="#868a12"/><path d="M4 3h1v1h-1zM6 3h2v1h-2zM9 3h1v1h-1zM11 3h1v1h-1zM3 4h1v1h-1zM5 4h5v1h-5zM11 4h1v1h-1zM4 5h7v1h-7zM3 6h4v1h-4zM8 6h4v1h-4zM4 7h7v1h-7zM3 8h1v1h-1zM5 8h5v1h-5zM11 8h1v1h-1zM4 9h1v1h-1zM6 9h2v1h-2zM9 9h1v1h-1zM11 9h1v1h-1zM5 10h1v1h-1zM10 10h1v1h-1zM3 11h1v1h-1z" fill="#141402"/><path d="M2 15h2M6 15h3M11 15h2M2 0h3M7 0h2M11 0h2" stroke="#1a1802" stroke-width="1"/><path d="M15 3v2M15 7v2M15 11v1M0 4v2M0 8v2" stroke="#1a1802" stroke-width="1"/><rect x="1" y="0" width="1" height="16" fill="#e22a10"/><rect x="13" y="0" width="1" height="16" fill="#e22a10"/><rect x="0" y="1" width="16" height="1" fill="#e22a10"/><rect x="0" y="13" width="16" height="1" fill="#e22a10"/></pattern>
<pattern id="tg" x="1" y="0" width="16" height="16" patternUnits="userSpaceOnUse"><rect width="16" height="16" fill="#3c3a04"/><rect x="2" y="7" width="11" height="6" fill="#6a6a0c"/><path d="M3 9h2v-1h2v1h2v-1h2v2h1v2h-2v1h-2v-1h-2v1h-2v-2h-1z" fill="#0a0a00"/><rect x="0" y="0" width="16" height="1" fill="#b8e890"/><path d="M2 7l3-3h5l-3 3z" fill="#30e050"/><path d="M9 7l2-3h3l-2 3z" fill="#18a838"/><rect x="0" y="3" width="2" height="2" fill="#108828"/><rect x="1" y="1" width="1" height="15" fill="#e22a10" opacity=".85"/><rect x="13" y="1" width="1" height="15" fill="#e22a10" opacity=".7"/><rect x="0" y="13" width="16" height="1" fill="#e22a10" opacity=".85"/><rect x="0" y="1" width="16" height="1" fill="#e22a10" opacity=".6"/></pattern>
<pattern id="td" x="1" y="0" width="16" height="16" patternUnits="userSpaceOnUse"><rect width="16" height="16" fill="#000"/><path d="M0 0h1v1h-1zM2 0h1v1h-1zM4 0h2v1h-2zM7 0h2v1h-2zM10 0h2v1h-2zM13 0h1v1h-1zM15 0h1v1h-1zM1 1h2v1h-2zM5 1h1v1h-1zM8 1h2v1h-2zM12 1h1v1h-1zM14 1h2v1h-2zM1 2h1v1h-1zM12 2h1v1h-1zM1 3h1v1h-1zM3 3h3v1h-3zM7 3h2v1h-2zM10 3h3v1h-3zM14 3h1v1h-1zM3 4h1v1h-1zM5 4h1v1h-1zM10 4h1v1h-1zM12 4h1v1h-1zM1 5h1v1h-1zM3 5h3v1h-3zM7 5h2v1h-2zM10 5h3v1h-3zM14 5h1v1h-1zM1 6h1v1h-1zM0 7h16v1h-16zM0 8h1v1h-1zM2 8h2v1h-2zM5 8h1v1h-1zM7 8h2v1h-2zM10 8h1v1h-1zM12 8h2v1h-2zM15 8h1v1h-1zM0 9h1v1h-1zM2 9h1v1h-1zM4 9h3v1h-3zM8 9h1v1h-1zM10 9h3v1h-3zM14 9h1v1h-1zM0 10h2v1h-2zM3 10h5v1h-5zM9 10h5v1h-5zM15 10h1v1h-1zM0 11h1v1h-1zM3 11h2v1h-2zM6 11h2v1h-2zM10 11h2v1h-2zM13 11h2v1h-2zM0 12h16v1h-16zM1 13h1v1h-1zM4 13h1v1h-1zM7 13h1v1h-1zM9 13h1v1h-1zM12 13h1v1h-1zM15 13h1v1h-1zM0 14h2v1h-2zM3 14h3v1h-3zM7 14h2v1h-2zM10 14h3v1h-3zM14 14h2v1h-2zM1 15h1v1h-1zM4 15h1v1h-1zM9 15h1v1h-1zM12 15h1v1h-1z" fill="#5e5800"/></pattern>
<pattern id="tk" x="1" y="0" width="8" height="10" patternUnits="userSpaceOnUse"><rect width="8" height="10" fill="#0a0800"/><rect x="0.500" y="0" width="3" height="8.500" rx="1.200" fill="#5c5008"/><rect x="4.500" y="2" width="1.200" height="6" fill="#4a4004"/><rect x="6.500" y="0" width="1" height="4" fill="#4a4004"/></pattern>
<pattern id="l0" width="32" height="32" patternUnits="userSpaceOnUse"><path d="M5 -1l3 1l1 3l-3-1l-2-3z" fill="#004c00"/><path d="M5 31l3 1l1 3l-3-1l-2-3z" fill="#004c00"/><path d="M13 -1l3 1l1 3l-3-1l-2-3z" fill="#004c00"/><path d="M13 31l3 1l1 3l-3-1l-2-3z" fill="#004c00"/><path d="M19 1l3 1l1 3l-3-1l-2-3z" fill="#005a00"/><path d="M19 33l3 1l1 3l-3-1l-2-3z" fill="#005a00"/><path d="M27 1l3 1l1 3l-3-1l-2-3z" fill="#003c00"/><path d="M27 33l3 1l1 3l-3-1l-2-3z" fill="#003c00"/><path d="M11 4l2-2l2 1l-1 3l-3 1z" fill="#005a00"/><path d="M11 36l2-2l2 1l-1 3l-3 1z" fill="#005a00"/><path d="M1 9l3-1l1 2l-2 3l-3-2z" fill="#004c00"/><path d="M33 9l3-1l1 2l-2 3l-3-2z" fill="#004c00"/><path d="M5 7l3 1l1 3l-3-1l-2-3z" fill="#003c00"/><path d="M3 13l3 1l1 3l-3-1l-2-3z" fill="#004c00"/><path d="M35 13l3 1l1 3l-3-1l-2-3z" fill="#004c00"/><path d="M23 11l1-3l3 1l-1 3l-3 1z" fill="#003c00"/><path d="M28 11l1-3l3 1l-1 3l-3 1z" fill="#005a00"/><path d="M-4 11l1-3l3 1l-1 3l-3 1z" fill="#005a00"/><path d="M1 15l3-1l1 2l-2 3l-3-2z" fill="#003c00"/><path d="M33 15l3-1l1 2l-2 3l-3-2z" fill="#003c00"/><path d="M19 16l3 1l1 3l-3-1l-2-3z" fill="#005a00"/><path d="M25 16l1-3l3 1l-1 3l-3 1z" fill="#003c00"/><path d="M28 17l3 1l1 3l-3-1l-2-3z" fill="#005a00"/><path d="M-4 17l3 1l1 3l-3-1l-2-3z" fill="#005a00"/><path d="M16 19l2-2l2 1l-1 3l-3 1z" fill="#003c00"/><path d="M0 25l2-2l2 1l-1 3l-3 1z" fill="#005a00"/><path d="M32 25l2-2l2 1l-1 3l-3 1z" fill="#005a00"/><path d="M12 24l1-3l3 1l-1 3l-3 1z" fill="#003c00"/><path d="M19 23l2-2l2 1l-1 3l-3 1z" fill="#004c00"/><path d="M25 23l3-1l1 2l-2 3l-3-2z" fill="#005a00"/><path d="M28 25l3-1l1 2l-2 3l-3-2z" fill="#005a00"/><path d="M-4 25l3-1l1 2l-2 3l-3-2z" fill="#005a00"/><path d="M21 29l1-3l3 1l-1 3l-3 1z" fill="#005a00"/><path d="M21 -3l1-3l3 1l-1 3l-3 1z" fill="#005a00"/><path d="M29 28l2-2l2 1l-1 3l-3 1z" fill="#004c00"/><path d="M29 -4l2-2l2 1l-1 3l-3 1z" fill="#004c00"/><path d="M-3 28l2-2l2 1l-1 3l-3 1z" fill="#004c00"/><path d="M-3 -4l2-2l2 1l-1 3l-3 1z" fill="#004c00"/></pattern>
<pattern id="l1" width="32" height="32" patternUnits="userSpaceOnUse"><path d="M-1 0l3 1l1 3l-3-1l-2-3z" fill="#008a10"/><path d="M-1 32l3 1l1 3l-3-1l-2-3z" fill="#008a10"/><path d="M31 0l3 1l1 3l-3-1l-2-3z" fill="#008a10"/><path d="M31 32l3 1l1 3l-3-1l-2-3z" fill="#008a10"/><path d="M3 -1l2-2l2 1l-1 3l-3 1z" fill="#006a00"/><path d="M3 31l2-2l2 1l-1 3l-3 1z" fill="#006a00"/><path d="M35 -1l2-2l2 1l-1 3l-3 1z" fill="#006a00"/><path d="M35 31l2-2l2 1l-1 3l-3 1z" fill="#006a00"/><path d="M8 1l3 1l1 3l-3-1l-2-3z" fill="#006a00"/><path d="M8 33l3 1l1 3l-3-1l-2-3z" fill="#006a00"/><path d="M13 0l3-1l1 2l-2 3l-3-2z" fill="#008a10"/><path d="M13 32l3-1l1 2l-2 3l-3-2z" fill="#008a10"/><path d="M20 -1l1-3l3 1l-1 3l-3 1z" fill="#006a00"/><path d="M20 31l1-3l3 1l-1 3l-3 1z" fill="#006a00"/><path d="M28 0l2-2l2 1l-1 3l-3 1z" fill="#006a00"/><path d="M28 32l2-2l2 1l-1 3l-3 1z" fill="#006a00"/><path d="M-4 0l2-2l2 1l-1 3l-3 1z" fill="#006a00"/><path d="M-4 32l2-2l2 1l-1 3l-3 1z" fill="#006a00"/><path d="M0 5l1-3l3 1l-1 3l-3 1z" fill="#00a820"/><path d="M32 5l1-3l3 1l-1 3l-3 1z" fill="#00a820"/><path d="M3 5l2-2l2 1l-1 3l-3 1z" fill="#006a00"/><path d="M35 5l2-2l2 1l-1 3l-3 1z" fill="#006a00"/><path d="M11 5l3 1l1 3l-3-1l-2-3z" fill="#10b830"/><path d="M16 5l3-1l1 2l-2 3l-3-2z" fill="#006a00"/><path d="M19 4l3-1l1 2l-2 3l-3-2z" fill="#008a10"/><path d="M19 36l3-1l1 2l-2 3l-3-2z" fill="#008a10"/><path d="M25 3l1-3l3 1l-1 3l-3 1z" fill="#008a10"/><path d="M25 35l1-3l3 1l-1 3l-3 1z" fill="#008a10"/><path d="M27 3l1-3l3 1l-1 3l-3 1z" fill="#10b830"/><path d="M27 35l1-3l3 1l-1 3l-3 1z" fill="#10b830"/><path d="M-1 7l1-3l3 1l-1 3l-3 1z" fill="#00a820"/><path d="M31 7l1-3l3 1l-1 3l-3 1z" fill="#00a820"/><path d="M5 9l1-3l3 1l-1 3l-3 1z" fill="#00a820"/><path d="M9 8l3 1l1 3l-3-1l-2-3z" fill="#00a820"/><path d="M11 8l3-1l1 2l-2 3l-3-2z" fill="#008a10"/><path d="M17 9l1-3l3 1l-1 3l-3 1z" fill="#006a00"/><path d="M20 9l3 1l1 3l-3-1l-2-3z" fill="#006a00"/><path d="M25 7l2-2l2 1l-1 3l-3 1z" fill="#18b838"/><path d="M29 8l1-3l3 1l-1 3l-3 1z" fill="#006a00"/><path d="M-3 8l1-3l3 1l-1 3l-3 1z" fill="#006a00"/><path d="M1 11l2-2l2 1l-1 3l-3 1z" fill="#007a08"/><path d="M33 11l2-2l2 1l-1 3l-3 1z" fill="#007a08"/><path d="M3 11l1-3l3 1l-1 3l-3 1z" fill="#008a10"/><path d="M35 11l1-3l3 1l-1 3l-3 1z" fill="#008a10"/><path d="M7 13l1-3l3 1l-1 3l-3 1z" fill="#10b830"/><path d="M12 11l2-2l2 1l-1 3l-3 1z" fill="#10b830"/><path d="M17 13l2-2l2 1l-1 3l-3 1z" fill="#006a00"/><path d="M19 11l3-1l1 2l-2 3l-3-2z" fill="#006a00"/><path d="M25 11l3-1l1 2l-2 3l-3-2z" fill="#10b830"/><path d="M28 11l3-1l1 2l-2 3l-3-2z" fill="#006a00"/><path d="M-4 11l3-1l1 2l-2 3l-3-2z" fill="#006a00"/><path d="M1 17l1-3l3 1l-1 3l-3 1z" fill="#10b830"/><path d="M33 17l1-3l3 1l-1 3l-3 1z" fill="#10b830"/><path d="M5 15l2-2l2 1l-1 3l-3 1z" fill="#10b830"/><path d="M7 16l3 1l1 3l-3-1l-2-3z" fill="#008a10"/><path d="M11 15l1-3l3 1l-1 3l-3 1z" fill="#008a10"/><path d="M15 17l3-1l1 2l-2 3l-3-2z" fill="#006a00"/><path d="M21 17l3 1l1 3l-3-1l-2-3z" fill="#18b838"/><path d="M23 15l3-1l1 2l-2 3l-3-2z" fill="#008a10"/><path d="M27 17l3 1l1 3l-3-1l-2-3z" fill="#18b838"/><path d="M-1 20l2-2l2 1l-1 3l-3 1z" fill="#00a820"/><path d="M31 20l2-2l2 1l-1 3l-3 1z" fill="#00a820"/><path d="M4 21l1-3l3 1l-1 3l-3 1z" fill="#10b830"/><path d="M36 21l1-3l3 1l-1 3l-3 1z" fill="#10b830"/><path d="M7 21l3-1l1 2l-2 3l-3-2z" fill="#10b830"/><path d="M15 20l1-3l3 1l-1 3l-3 1z" fill="#008a10"/><path d="M20 20l2-2l2 1l-1 3l-3 1z" fill="#006a00"/><path d="M23 21l3 1l1 3l-3-1l-2-3z" fill="#00a820"/><path d="M27 21l3-1l1 2l-2 3l-3-2z" fill="#007a08"/><path d="M-1 24l3 1l1 3l-3-1l-2-3z" fill="#008a10"/><path d="M31 24l3 1l1 3l-3-1l-2-3z" fill="#008a10"/><path d="M4 23l2-2l2 1l-1 3l-3 1z" fill="#007a08"/><path d="M36 23l2-2l2 1l-1 3l-3 1z" fill="#007a08"/><path d="M8 25l3-1l1 2l-2 3l-3-2z" fill="#18b838"/><path d="M12 24l3-1l1 2l-2 3l-3-2z" fill="#006a00"/><path d="M17 24l3 1l1 3l-3-1l-2-3z" fill="#18b838"/><path d="M21 25l3 1l1 3l-3-1l-2-3z" fill="#00a820"/><path d="M23 23l3-1l1 2l-2 3l-3-2z" fill="#006a00"/><path d="M27 24l1-3l3 1l-1 3l-3 1z" fill="#008a10"/><path d="M1 28l2-2l2 1l-1 3l-3 1z" fill="#18b838"/><path d="M1 -4l2-2l2 1l-1 3l-3 1z" fill="#18b838"/><path d="M33 28l2-2l2 1l-1 3l-3 1z" fill="#18b838"/><path d="M33 -4l2-2l2 1l-1 3l-3 1z" fill="#18b838"/><path d="M5 29l3-1l1 2l-2 3l-3-2z" fill="#18b838"/><path d="M5 -3l3-1l1 2l-2 3l-3-2z" fill="#18b838"/><path d="M7 29l1-3l3 1l-1 3l-3 1z" fill="#008a10"/><path d="M7 -3l1-3l3 1l-1 3l-3 1z" fill="#008a10"/><path d="M12 27l3 1l1 3l-3-1l-2-3z" fill="#007a08"/><path d="M15 29l3 1l1 3l-3-1l-2-3z" fill="#008a10"/><path d="M15 -3l3 1l1 3l-3-1l-2-3z" fill="#008a10"/><path d="M19 28l3-1l1 2l-2 3l-3-2z" fill="#006a00"/><path d="M19 -4l3-1l1 2l-2 3l-3-2z" fill="#006a00"/><path d="M28 29l3 1l1 3l-3-1l-2-3z" fill="#008a10"/><path d="M28 -3l3 1l1 3l-3-1l-2-3z" fill="#008a10"/><path d="M-4 29l3 1l1 3l-3-1l-2-3z" fill="#008a10"/><path d="M-4 -3l3 1l1 3l-3-1l-2-3z" fill="#008a10"/></pattern>
<pattern id="l2" width="32" height="32" patternUnits="userSpaceOnUse"><path d="M-1 -1l3-1l1 2l-2 3l-3-2z" fill="#60f060"/><path d="M-1 31l3-1l1 2l-2 3l-3-2z" fill="#60f060"/><path d="M31 -1l3-1l1 2l-2 3l-3-2z" fill="#60f060"/><path d="M31 31l3-1l1 2l-2 3l-3-2z" fill="#60f060"/><path d="M3 0l3-1l1 2l-2 3l-3-2z" fill="#40e050"/><path d="M3 32l3-1l1 2l-2 3l-3-2z" fill="#40e050"/><path d="M35 0l3-1l1 2l-2 3l-3-2z" fill="#40e050"/><path d="M35 32l3-1l1 2l-2 3l-3-2z" fill="#40e050"/><path d="M7 0l2-2l2 1l-1 3l-3 1z" fill="#20c838"/><path d="M7 32l2-2l2 1l-1 3l-3 1z" fill="#20c838"/><path d="M11 0l3 1l1 3l-3-1l-2-3z" fill="#30d040"/><path d="M11 32l3 1l1 3l-3-1l-2-3z" fill="#30d040"/><path d="M17 1l1-3l3 1l-1 3l-3 1z" fill="#60f060"/><path d="M17 33l1-3l3 1l-1 3l-3 1z" fill="#60f060"/><path d="M20 -1l1-3l3 1l-1 3l-3 1z" fill="#40e050"/><path d="M20 31l1-3l3 1l-1 3l-3 1z" fill="#40e050"/><path d="M25 0l3-1l1 2l-2 3l-3-2z" fill="#88ff88"/><path d="M25 32l3-1l1 2l-2 3l-3-2z" fill="#88ff88"/><path d="M27 0l2-2l2 1l-1 3l-3 1z" fill="#60f060"/><path d="M27 32l2-2l2 1l-1 3l-3 1z" fill="#60f060"/><path d="M0 3l2-2l2 1l-1 3l-3 1z" fill="#50e858"/><path d="M0 35l2-2l2 1l-1 3l-3 1z" fill="#50e858"/><path d="M32 3l2-2l2 1l-1 3l-3 1z" fill="#50e858"/><path d="M32 35l2-2l2 1l-1 3l-3 1z" fill="#50e858"/><path d="M5 5l1-3l3 1l-1 3l-3 1z" fill="#18b830"/><path d="M7 5l1-3l3 1l-1 3l-3 1z" fill="#50e858"/><path d="M13 4l2-2l2 1l-1 3l-3 1z" fill="#88ff88"/><path d="M13 36l2-2l2 1l-1 3l-3 1z" fill="#88ff88"/><path d="M15 4l2-2l2 1l-1 3l-3 1z" fill="#60f060"/><path d="M15 36l2-2l2 1l-1 3l-3 1z" fill="#60f060"/><path d="M19 4l3-1l1 2l-2 3l-3-2z" fill="#18b830"/><path d="M19 36l3-1l1 2l-2 3l-3-2z" fill="#18b830"/><path d="M27 3l2-2l2 1l-1 3l-3 1z" fill="#18b830"/><path d="M27 35l2-2l2 1l-1 3l-3 1z" fill="#18b830"/><path d="M-1 8l3 1l1 3l-3-1l-2-3z" fill="#20c838"/><path d="M31 8l3 1l1 3l-3-1l-2-3z" fill="#20c838"/><path d="M5 9l2-2l2 1l-1 3l-3 1z" fill="#60f060"/><path d="M7 7l3 1l1 3l-3-1l-2-3z" fill="#18b830"/><path d="M13 7l3 1l1 3l-3-1l-2-3z" fill="#20c838"/><path d="M17 7l2-2l2 1l-1 3l-3 1z" fill="#30d040"/><path d="M21 9l3-1l1 2l-2 3l-3-2z" fill="#20c838"/><path d="M24 7l2-2l2 1l-1 3l-3 1z" fill="#18b830"/><path d="M29 9l1-3l3 1l-1 3l-3 1z" fill="#40e050"/><path d="M-3 9l1-3l3 1l-1 3l-3 1z" fill="#40e050"/><path d="M1 11l3 1l1 3l-3-1l-2-3z" fill="#88ff88"/><path d="M33 11l3 1l1 3l-3-1l-2-3z" fill="#88ff88"/><path d="M5 13l2-2l2 1l-1 3l-3 1z" fill="#40e050"/><path d="M7 11l3-1l1 2l-2 3l-3-2z" fill="#40e050"/><path d="M16 13l3 1l1 3l-3-1l-2-3z" fill="#30d040"/><path d="M21 11l3-1l1 2l-2 3l-3-2z" fill="#20c838"/><path d="M23 13l3 1l1 3l-3-1l-2-3z" fill="#88ff88"/><path d="M27 13l1-3l3 1l-1 3l-3 1z" fill="#40e050"/><path d="M-1 16l2-2l2 1l-1 3l-3 1z" fill="#60f060"/><path d="M31 16l2-2l2 1l-1 3l-3 1z" fill="#60f060"/><path d="M5 16l1-3l3 1l-1 3l-3 1z" fill="#20c838"/><path d="M9 16l3 1l1 3l-3-1l-2-3z" fill="#50e858"/><path d="M13 15l2-2l2 1l-1 3l-3 1z" fill="#30d040"/><path d="M17 17l3-1l1 2l-2 3l-3-2z" fill="#40e050"/><path d="M19 15l3 1l1 3l-3-1l-2-3z" fill="#20c838"/><path d="M25 15l2-2l2 1l-1 3l-3 1z" fill="#40e050"/><path d="M28 17l3-1l1 2l-2 3l-3-2z" fill="#88ff88"/><path d="M-4 17l3-1l1 2l-2 3l-3-2z" fill="#88ff88"/><path d="M0 19l2-2l2 1l-1 3l-3 1z" fill="#88ff88"/><path d="M32 19l2-2l2 1l-1 3l-3 1z" fill="#88ff88"/><path d="M3 20l3-1l1 2l-2 3l-3-2z" fill="#30d040"/><path d="M35 20l3-1l1 2l-2 3l-3-2z" fill="#30d040"/><path d="M9 20l1-3l3 1l-1 3l-3 1z" fill="#18b830"/><path d="M11 19l3 1l1 3l-3-1l-2-3z" fill="#88ff88"/><path d="M17 20l2-2l2 1l-1 3l-3 1z" fill="#18b830"/><path d="M21 21l3 1l1 3l-3-1l-2-3z" fill="#18b830"/><path d="M23 20l1-3l3 1l-1 3l-3 1z" fill="#20c838"/><path d="M27 20l1-3l3 1l-1 3l-3 1z" fill="#40e050"/><path d="M1 23l3-1l1 2l-2 3l-3-2z" fill="#20c838"/><path d="M33 23l3-1l1 2l-2 3l-3-2z" fill="#20c838"/><path d="M3 24l3-1l1 2l-2 3l-3-2z" fill="#30d040"/><path d="M35 24l3-1l1 2l-2 3l-3-2z" fill="#30d040"/><path d="M8 23l3 1l1 3l-3-1l-2-3z" fill="#60f060"/><path d="M12 24l3 1l1 3l-3-1l-2-3z" fill="#18b830"/><path d="M17 23l1-3l3 1l-1 3l-3 1z" fill="#18b830"/><path d="M19 24l3 1l1 3l-3-1l-2-3z" fill="#30d040"/><path d="M24 25l2-2l2 1l-1 3l-3 1z" fill="#60f060"/><path d="M0 27l3-1l1 2l-2 3l-3-2z" fill="#50e858"/><path d="M32 27l3-1l1 2l-2 3l-3-2z" fill="#50e858"/><path d="M4 27l1-3l3 1l-1 3l-3 1z" fill="#50e858"/><path d="M36 27l1-3l3 1l-1 3l-3 1z" fill="#50e858"/><path d="M9 29l3 1l1 3l-3-1l-2-3z" fill="#60f060"/><path d="M9 -3l3 1l1 3l-3-1l-2-3z" fill="#60f060"/><path d="M13 28l2-2l2 1l-1 3l-3 1z" fill="#20c838"/><path d="M13 -4l2-2l2 1l-1 3l-3 1z" fill="#20c838"/><path d="M16 28l2-2l2 1l-1 3l-3 1z" fill="#30d040"/><path d="M16 -4l2-2l2 1l-1 3l-3 1z" fill="#30d040"/><path d="M20 28l3-1l1 2l-2 3l-3-2z" fill="#18b830"/><path d="M20 -4l3-1l1 2l-2 3l-3-2z" fill="#18b830"/><path d="M25 29l1-3l3 1l-1 3l-3 1z" fill="#18b830"/><path d="M25 -3l1-3l3 1l-1 3l-3 1z" fill="#18b830"/><path d="M28 28l1-3l3 1l-1 3l-3 1z" fill="#88ff88"/><path d="M28 -4l1-3l3 1l-1 3l-3 1z" fill="#88ff88"/><path d="M-4 28l1-3l3 1l-1 3l-3 1z" fill="#88ff88"/><path d="M-4 -4l1-3l3 1l-1 3l-3 1z" fill="#88ff88"/></pattern>
<pattern id="l3" width="32" height="32" patternUnits="userSpaceOnUse"><path d="M1 -1l2-2l2 1l-1 3l-3 1z" fill="#006000"/><path d="M1 31l2-2l2 1l-1 3l-3 1z" fill="#006000"/><path d="M33 -1l2-2l2 1l-1 3l-3 1z" fill="#006000"/><path d="M33 31l2-2l2 1l-1 3l-3 1z" fill="#006000"/><path d="M4 1l1-3l3 1l-1 3l-3 1z" fill="#007a08"/><path d="M4 33l1-3l3 1l-1 3l-3 1z" fill="#007a08"/><path d="M36 1l1-3l3 1l-1 3l-3 1z" fill="#007a08"/><path d="M36 33l1-3l3 1l-1 3l-3 1z" fill="#007a08"/><path d="M15 1l2-2l2 1l-1 3l-3 1z" fill="#007a08"/><path d="M15 33l2-2l2 1l-1 3l-3 1z" fill="#007a08"/><path d="M20 1l3-1l1 2l-2 3l-3-2z" fill="#006000"/><path d="M20 33l3-1l1 2l-2 3l-3-2z" fill="#006000"/><path d="M24 1l3 1l1 3l-3-1l-2-3z" fill="#007a08"/><path d="M24 33l3 1l1 3l-3-1l-2-3z" fill="#007a08"/><path d="M28 0l2-2l2 1l-1 3l-3 1z" fill="#009418"/><path d="M28 32l2-2l2 1l-1 3l-3 1z" fill="#009418"/><path d="M-4 0l2-2l2 1l-1 3l-3 1z" fill="#009418"/><path d="M-4 32l2-2l2 1l-1 3l-3 1z" fill="#009418"/><path d="M0 3l3-1l1 2l-2 3l-3-2z" fill="#009418"/><path d="M0 35l3-1l1 2l-2 3l-3-2z" fill="#009418"/><path d="M32 3l3-1l1 2l-2 3l-3-2z" fill="#009418"/><path d="M32 35l3-1l1 2l-2 3l-3-2z" fill="#009418"/><path d="M4 3l2-2l2 1l-1 3l-3 1z" fill="#006a00"/><path d="M4 35l2-2l2 1l-1 3l-3 1z" fill="#006a00"/><path d="M36 3l2-2l2 1l-1 3l-3 1z" fill="#006a00"/><path d="M36 35l2-2l2 1l-1 3l-3 1z" fill="#006a00"/><path d="M7 4l1-3l3 1l-1 3l-3 1z" fill="#009418"/><path d="M7 36l1-3l3 1l-1 3l-3 1z" fill="#009418"/><path d="M12 3l3 1l1 3l-3-1l-2-3z" fill="#007a08"/><path d="M12 35l3 1l1 3l-3-1l-2-3z" fill="#007a08"/><path d="M16 5l3 1l1 3l-3-1l-2-3z" fill="#009418"/><path d="M21 4l2-2l2 1l-1 3l-3 1z" fill="#009418"/><path d="M21 36l2-2l2 1l-1 3l-3 1z" fill="#009418"/><path d="M23 3l3 1l1 3l-3-1l-2-3z" fill="#007a08"/><path d="M23 35l3 1l1 3l-3-1l-2-3z" fill="#007a08"/><path d="M1 8l3 1l1 3l-3-1l-2-3z" fill="#006000"/><path d="M33 8l3 1l1 3l-3-1l-2-3z" fill="#006000"/><path d="M3 7l3 1l1 3l-3-1l-2-3z" fill="#006a00"/><path d="M35 7l3 1l1 3l-3-1l-2-3z" fill="#006a00"/><path d="M8 7l1-3l3 1l-1 3l-3 1z" fill="#004800"/><path d="M11 7l3-1l1 2l-2 3l-3-2z" fill="#006000"/><path d="M17 7l3-1l1 2l-2 3l-3-2z" fill="#009418"/><path d="M21 7l3-1l1 2l-2 3l-3-2z" fill="#006000"/><path d="M28 9l1-3l3 1l-1 3l-3 1z" fill="#007a08"/><path d="M-4 9l1-3l3 1l-1 3l-3 1z" fill="#007a08"/><path d="M1 11l1-3l3 1l-1 3l-3 1z" fill="#006000"/><path d="M33 11l1-3l3 1l-1 3l-3 1z" fill="#006000"/><path d="M4 11l2-2l2 1l-1 3l-3 1z" fill="#006000"/><path d="M36 11l2-2l2 1l-1 3l-3 1z" fill="#006000"/><path d="M9 13l3 1l1 3l-3-1l-2-3z" fill="#009418"/><path d="M13 12l2-2l2 1l-1 3l-3 1z" fill="#004800"/><path d="M17 12l3-1l1 2l-2 3l-3-2z" fill="#009418"/><path d="M19 11l3 1l1 3l-3-1l-2-3z" fill="#004800"/><path d="M23 12l2-2l2 1l-1 3l-3 1z" fill="#007a08"/><path d="M28 12l1-3l3 1l-1 3l-3 1z" fill="#006000"/><path d="M-4 12l1-3l3 1l-1 3l-3 1z" fill="#006000"/><path d="M-1 16l3 1l1 3l-3-1l-2-3z" fill="#009418"/><path d="M31 16l3 1l1 3l-3-1l-2-3z" fill="#009418"/><path d="M8 15l3 1l1 3l-3-1l-2-3z" fill="#007a08"/><path d="M15 17l2-2l2 1l-1 3l-3 1z" fill="#006000"/><path d="M21 16l3 1l1 3l-3-1l-2-3z" fill="#006000"/><path d="M27 17l1-3l3 1l-1 3l-3 1z" fill="#006a00"/><path d="M1 21l3-1l1 2l-2 3l-3-2z" fill="#009418"/><path d="M33 21l3-1l1 2l-2 3l-3-2z" fill="#009418"/><path d="M7 19l3-1l1 2l-2 3l-3-2z" fill="#006000"/><path d="M12 19l2-2l2 1l-1 3l-3 1z" fill="#006a00"/><path d="M16 20l3 1l1 3l-3-1l-2-3z" fill="#006000"/><path d="M19 20l1-3l3 1l-1 3l-3 1z" fill="#006a00"/><path d="M24 21l3 1l1 3l-3-1l-2-3z" fill="#009418"/><path d="M27 21l3 1l1 3l-3-1l-2-3z" fill="#009418"/><path d="M0 23l3-1l1 2l-2 3l-3-2z" fill="#006000"/><path d="M32 23l3-1l1 2l-2 3l-3-2z" fill="#006000"/><path d="M3 25l3-1l1 2l-2 3l-3-2z" fill="#004800"/><path d="M35 25l3-1l1 2l-2 3l-3-2z" fill="#004800"/><path d="M9 23l3-1l1 2l-2 3l-3-2z" fill="#004800"/><path d="M17 25l3 1l1 3l-3-1l-2-3z" fill="#006000"/><path d="M25 24l3-1l1 2l-2 3l-3-2z" fill="#009418"/><path d="M4 27l3-1l1 2l-2 3l-3-2z" fill="#006000"/><path d="M36 27l3-1l1 2l-2 3l-3-2z" fill="#006000"/><path d="M13 27l3-1l1 2l-2 3l-3-2z" fill="#004800"/><path d="M17 27l2-2l2 1l-1 3l-3 1z" fill="#006a00"/><path d="M19 27l3 1l1 3l-3-1l-2-3z" fill="#009418"/><path d="M24 29l3-1l1 2l-2 3l-3-2z" fill="#006a00"/><path d="M24 -3l3-1l1 2l-2 3l-3-2z" fill="#006a00"/><path d="M28 27l3-1l1 2l-2 3l-3-2z" fill="#006000"/><path d="M-4 27l3-1l1 2l-2 3l-3-2z" fill="#006000"/></pattern>
<pattern id="l4" width="32" height="32" patternUnits="userSpaceOnUse"><path d="M4 0l2-2l2 1l-1 3l-3 1z" fill="#005000"/><path d="M4 32l2-2l2 1l-1 3l-3 1z" fill="#005000"/><path d="M36 0l2-2l2 1l-1 3l-3 1z" fill="#005000"/><path d="M36 32l2-2l2 1l-1 3l-3 1z" fill="#005000"/><path d="M8 0l3 1l1 3l-3-1l-2-3z" fill="#10b028"/><path d="M8 32l3 1l1 3l-3-1l-2-3z" fill="#10b028"/><path d="M16 1l3-1l1 2l-2 3l-3-2z" fill="#006a00"/><path d="M16 33l3-1l1 2l-2 3l-3-2z" fill="#006a00"/><path d="M20 -1l2-2l2 1l-1 3l-3 1z" fill="#005000"/><path d="M20 31l2-2l2 1l-1 3l-3 1z" fill="#005000"/><path d="M23 -1l2-2l2 1l-1 3l-3 1z" fill="#006a00"/><path d="M23 31l2-2l2 1l-1 3l-3 1z" fill="#006a00"/><path d="M28 0l2-2l2 1l-1 3l-3 1z" fill="#10b028"/><path d="M28 32l2-2l2 1l-1 3l-3 1z" fill="#10b028"/><path d="M-4 0l2-2l2 1l-1 3l-3 1z" fill="#10b028"/><path d="M-4 32l2-2l2 1l-1 3l-3 1z" fill="#10b028"/><path d="M4 3l3 1l1 3l-3-1l-2-3z" fill="#008a10"/><path d="M4 35l3 1l1 3l-3-1l-2-3z" fill="#008a10"/><path d="M36 3l3 1l1 3l-3-1l-2-3z" fill="#008a10"/><path d="M36 35l3 1l1 3l-3-1l-2-3z" fill="#008a10"/><path d="M24 3l3 1l1 3l-3-1l-2-3z" fill="#008a10"/><path d="M24 35l3 1l1 3l-3-1l-2-3z" fill="#008a10"/><path d="M29 3l3-1l1 2l-2 3l-3-2z" fill="#008a10"/><path d="M29 35l3-1l1 2l-2 3l-3-2z" fill="#008a10"/><path d="M-3 3l3-1l1 2l-2 3l-3-2z" fill="#008a10"/><path d="M-3 35l3-1l1 2l-2 3l-3-2z" fill="#008a10"/><path d="M5 8l3 1l1 3l-3-1l-2-3z" fill="#008a10"/><path d="M15 8l2-2l2 1l-1 3l-3 1z" fill="#006a00"/><path d="M20 7l3 1l1 3l-3-1l-2-3z" fill="#10b028"/><path d="M1 12l2-2l2 1l-1 3l-3 1z" fill="#008a10"/><path d="M33 12l2-2l2 1l-1 3l-3 1z" fill="#008a10"/><path d="M4 13l3 1l1 3l-3-1l-2-3z" fill="#005000"/><path d="M36 13l3 1l1 3l-3-1l-2-3z" fill="#005000"/><path d="M21 11l1-3l3 1l-1 3l-3 1z" fill="#10b028"/><path d="M0 16l3-1l1 2l-2 3l-3-2z" fill="#008a10"/><path d="M32 16l3-1l1 2l-2 3l-3-2z" fill="#008a10"/><path d="M16 17l1-3l3 1l-1 3l-3 1z" fill="#10b028"/><path d="M23 16l1-3l3 1l-1 3l-3 1z" fill="#10b028"/><path d="M27 16l1-3l3 1l-1 3l-3 1z" fill="#006a00"/><path d="M3 21l1-3l3 1l-1 3l-3 1z" fill="#10b028"/><path d="M35 21l1-3l3 1l-1 3l-3 1z" fill="#10b028"/><path d="M9 20l2-2l2 1l-1 3l-3 1z" fill="#10b028"/><path d="M11 21l3 1l1 3l-3-1l-2-3z" fill="#10b028"/><path d="M16 19l2-2l2 1l-1 3l-3 1z" fill="#006a00"/><path d="M24 20l1-3l3 1l-1 3l-3 1z" fill="#008a10"/><path d="M29 21l2-2l2 1l-1 3l-3 1z" fill="#10b028"/><path d="M-3 21l2-2l2 1l-1 3l-3 1z" fill="#10b028"/><path d="M8 23l3 1l1 3l-3-1l-2-3z" fill="#10b028"/><path d="M13 23l3-1l1 2l-2 3l-3-2z" fill="#005000"/><path d="M15 25l3 1l1 3l-3-1l-2-3z" fill="#10b028"/><path d="M4 29l3-1l1 2l-2 3l-3-2z" fill="#005000"/><path d="M4 -3l3-1l1 2l-2 3l-3-2z" fill="#005000"/><path d="M36 29l3-1l1 2l-2 3l-3-2z" fill="#005000"/><path d="M36 -3l3-1l1 2l-2 3l-3-2z" fill="#005000"/><path d="M11 28l3-1l1 2l-2 3l-3-2z" fill="#005000"/><path d="M11 -4l3-1l1 2l-2 3l-3-2z" fill="#005000"/><path d="M25 28l2-2l2 1l-1 3l-3 1z" fill="#005000"/><path d="M25 -4l2-2l2 1l-1 3l-3 1z" fill="#005000"/></pattern>
</defs>
<rect x="0" y="0" width="748" height="240" fill="#000"/>
<path d="M-13 192 C-17 162 -17 124 -14.2 82 L-12 74 L10 72 C15 124 15 162 11 191 z" fill="#0000bc"/>
<path d="M16.8 187 C14 157 14 132 16.08 90 L17.8 82 L21.2 80 C25 132 25 157 22.2 186 z" fill="#0000bc"/>
<path d="M38 186 C34 156 34 131 36.8 89 L39 81 L48 79 C53 131 53 156 49 185 z" fill="#0000bc"/>
<path d="M77 183 C73 153 73 130 75.8 88 L78 80 L119 78 C124 130 124 153 120 182 z" fill="#0000bc"/>
<path d="M132 183 C128 153 128 124 130.8 82 L133 74 L141 72 C146 124 146 153 142 182 z" fill="#0000bc"/>
<path d="M163 177 C159 147 159 139 161.8 97 L164 89 L173 87 C178 139 178 147 174 176 z" fill="#0000bc"/>
<path d="M190 175 C186 145 186 137 188.8 95 L191 87 L208 85 C213 137 213 145 209 174 z" fill="#0000bc"/>
<path d="M228 177 C224 147 224 130 226.8 88 L229 80 L238 78 C243 130 243 147 239 176 z" fill="#0000bc"/>
<path d="M253.2 175 C250 145 250 147 252.32 105 L254.2 97 L258.8 95 C263 147 263 145 259.8 174 z" fill="#0000bc"/>
<path d="M272.2 176 C269 146 269 134 271.32 92 L273.2 84 L277.8 82 C282 134 282 146 278.8 175 z" fill="#0000bc"/>
<polygon points="2.19544,105.542 10.9652,71 12.655,71 4.19544,109.068" fill="#000"/>
<polygon points="-13.2459,105.312 -7.24965,71 -5.53845,71 -11.2459,99.8822" fill="#000"/>
<polygon points="18.859,108.569 13.4511,79 15.3616,79 20.859,114.774" fill="#000"/>
<polygon points="19.0408,114.996 10.9779,79 15.9023,79 21.0408,115.566" fill="#000"/>
<polygon points="38.804,104.52 43.8111,78 49.7896,78 40.804,107.513" fill="#000"/>
<polygon points="39.8013,113.469 33.644,78 33.4553,78 41.8013,111.471" fill="#000"/>
<polygon points="106.502,104.18 97.6281,77 103.215,77 108.502,115.581" fill="#000"/>
<polygon points="93.2451,106.334 87.5812,77 90.1622,77 95.2451,104.782" fill="#000"/>
<polygon points="134.616,103.152 126.786,71 131.852,71 136.616,102.264" fill="#000"/>
<polygon points="134.673,98.2173 141.563,71 142.877,71 136.673,101.074" fill="#000"/>
<polygon points="174.207,121.139 179.279,86 184.858,86 176.207,117.394" fill="#000"/>
<polygon points="169.521,116.434 161.69,86 164.526,86 171.521,124.453" fill="#000"/>
<polygon points="191.499,120.156 182.731,84 187.622,84 193.499,115.258" fill="#000"/>
<polygon points="200.019,110.297 208.012,84 210.708,84 202.019,121.316" fill="#000"/>
<polygon points="227.476,104.502 220.425,77 223.526,77 229.476,105.778" fill="#000"/>
<polygon points="230.584,105.749 224.317,77 227.374,77 232.584,104.938" fill="#000"/>
<polygon points="254.042,130.961 259.688,94 261.736,94 256.042,132.84" fill="#000"/>
<polygon points="256.735,119.382 264.697,94 265.61,94 258.735,124.003" fill="#000"/>
<polygon points="276.557,106.668 267.892,81 273.926,81 278.557,113.923" fill="#000"/>
<polygon points="277.869,117.776 270.613,81 274.838,81 279.869,118.758" fill="#000"/>
<polygon points="-14,74 -10,74 1,100 3,140 -1,140 -3,104" fill="#000"/>
<polygon points="52,80 49,80 38,110 36,150 39,150 41,112" fill="#000"/>
<polygon points="84,184 98,184 97,150 94,128 113,76 118,76 122,90 104,120 92,122 76,84 74,100 86,130 84,160" fill="#000"/>
<polygon points="90,100 93,100 97,80 94,80" fill="#000"/>
<polygon points="129,92 133,80 145,100 145,108 135,92" fill="#000"/>
<polygon points="160,120 170,89 174,89 163,124" fill="#000"/>
<polygon points="187,112 200,87 204,87 190,118" fill="#000"/>
<polygon points="212,96 207,87 203,87 210,104" fill="#000"/>
<polygon points="225,104 236,80 240,80 228,110" fill="#000"/>
<path d="M307 192 C303 162 303 124 305.8 82 L308 74 L330 72 C335 124 335 162 331 191 z" fill="#0000bc"/>
<path d="M336.8 187 C334 157 334 132 336.08 90 L337.8 82 L341.2 80 C345 132 345 157 342.2 186 z" fill="#0000bc"/>
<path d="M358 186 C354 156 354 131 356.8 89 L359 81 L368 79 C373 131 373 156 369 185 z" fill="#0000bc"/>
<path d="M397 183 C393 153 393 130 395.8 88 L398 80 L439 78 C444 130 444 153 440 182 z" fill="#0000bc"/>
<path d="M452 183 C448 153 448 124 450.8 82 L453 74 L461 72 C466 124 466 153 462 182 z" fill="#0000bc"/>
<path d="M483 177 C479 147 479 139 481.8 97 L484 89 L493 87 C498 139 498 147 494 176 z" fill="#0000bc"/>
<path d="M510 175 C506 145 506 137 508.8 95 L511 87 L528 85 C533 137 533 145 529 174 z" fill="#0000bc"/>
<path d="M548 177 C544 147 544 130 546.8 88 L549 80 L558 78 C563 130 563 147 559 176 z" fill="#0000bc"/>
<path d="M573.2 175 C570 145 570 147 572.32 105 L574.2 97 L578.8 95 C583 147 583 145 579.8 174 z" fill="#0000bc"/>
<path d="M592.2 176 C589 146 589 134 591.32 92 L593.2 84 L597.8 82 C602 134 602 146 598.8 175 z" fill="#0000bc"/>
<polygon points="322.195,105.542 330.965,71 332.655,71 324.195,109.068" fill="#000"/>
<polygon points="306.754,105.312 312.75,71 314.462,71 308.754,99.8822" fill="#000"/>
<polygon points="338.859,108.569 333.451,79 335.362,79 340.859,114.774" fill="#000"/>
<polygon points="339.041,114.996 330.978,79 335.902,79 341.041,115.566" fill="#000"/>
<polygon points="358.804,104.52 363.811,78 369.79,78 360.804,107.513" fill="#000"/>
<polygon points="359.801,113.469 353.644,78 353.455,78 361.801,111.471" fill="#000"/>
<polygon points="426.502,104.18 417.628,77 423.215,77 428.502,115.581" fill="#000"/>
<polygon points="413.245,106.334 407.581,77 410.162,77 415.245,104.782" fill="#000"/>
<polygon points="454.616,103.152 446.786,71 451.852,71 456.616,102.264" fill="#000"/>
<polygon points="454.673,98.2173 461.563,71 462.877,71 456.673,101.074" fill="#000"/>
<polygon points="494.207,121.139 499.279,86 504.858,86 496.207,117.394" fill="#000"/>
<polygon points="489.521,116.434 481.69,86 484.526,86 491.521,124.453" fill="#000"/>
<polygon points="511.499,120.156 502.731,84 507.622,84 513.499,115.258" fill="#000"/>
<polygon points="520.019,110.297 528.012,84 530.708,84 522.019,121.316" fill="#000"/>
<polygon points="547.476,104.502 540.425,77 543.526,77 549.476,105.778" fill="#000"/>
<polygon points="550.584,105.749 544.317,77 547.374,77 552.584,104.938" fill="#000"/>
<polygon points="574.042,130.961 579.688,94 581.736,94 576.042,132.84" fill="#000"/>
<polygon points="576.735,119.382 584.697,94 585.61,94 578.735,124.003" fill="#000"/>
<polygon points="596.557,106.668 587.892,81 593.926,81 598.557,113.923" fill="#000"/>
<polygon points="597.869,117.776 590.613,81 594.838,81 599.869,118.758" fill="#000"/>
<polygon points="306,74 310,74 321,100 323,140 319,140 317,104" fill="#000"/>
<polygon points="372,80 369,80 358,110 356,150 359,150 361,112" fill="#000"/>
<polygon points="404,184 418,184 417,150 414,128 433,76 438,76 442,90 424,120 412,122 396,84 394,100 406,130 404,160" fill="#000"/>
<polygon points="410,100 413,100 417,80 414,80" fill="#000"/>
<polygon points="449,92 453,80 465,100 465,108 455,92" fill="#000"/>
<polygon points="480,120 490,89 494,89 483,124" fill="#000"/>
<polygon points="507,112 520,87 524,87 510,118" fill="#000"/>
<polygon points="532,96 527,87 523,87 530,104" fill="#000"/>
<polygon points="545,104 556,80 560,80 548,110" fill="#000"/>
<path d="M627 192 C623 162 623 124 625.8 82 L628 74 L650 72 C655 124 655 162 651 191 z" fill="#0000bc"/>
<path d="M656.8 187 C654 157 654 132 656.08 90 L657.8 82 L661.2 80 C665 132 665 157 662.2 186 z" fill="#0000bc"/>
<path d="M678 186 C674 156 674 131 676.8 89 L679 81 L688 79 C693 131 693 156 689 185 z" fill="#0000bc"/>
<path d="M717 183 C713 153 713 130 715.8 88 L718 80 L759 78 C764 130 764 153 760 182 z" fill="#0000bc"/>
<polygon points="642.195,105.542 650.965,71 652.655,71 644.195,109.068" fill="#000"/>
<polygon points="626.754,105.312 632.75,71 634.462,71 628.754,99.8822" fill="#000"/>
<polygon points="658.859,108.569 653.451,79 655.362,79 660.859,114.774" fill="#000"/>
<polygon points="659.041,114.996 650.978,79 655.902,79 661.041,115.566" fill="#000"/>
<polygon points="678.804,104.52 683.811,78 689.79,78 680.804,107.513" fill="#000"/>
<polygon points="679.801,113.469 673.644,78 673.455,78 681.801,111.471" fill="#000"/>
<polygon points="746.502,104.18 737.628,77 743.215,77 748.502,115.581" fill="#000"/>
<polygon points="733.245,106.334 727.581,77 730.162,77 735.245,104.782" fill="#000"/>
<polygon points="774.616,103.152 766.786,71 771.852,71 776.616,102.264" fill="#000"/>
<polygon points="774.673,98.2173 781.563,71 782.877,71 776.673,101.074" fill="#000"/>
<polygon points="814.207,121.139 819.279,86 824.858,86 816.207,117.394" fill="#000"/>
<polygon points="809.521,116.434 801.69,86 804.526,86 811.521,124.453" fill="#000"/>
<polygon points="831.499,120.156 822.731,84 827.622,84 833.499,115.258" fill="#000"/>
<polygon points="840.019,110.297 848.012,84 850.708,84 842.019,121.316" fill="#000"/>
<polygon points="867.476,104.502 860.425,77 863.526,77 869.476,105.778" fill="#000"/>
<polygon points="870.584,105.749 864.317,77 867.374,77 872.584,104.938" fill="#000"/>
<polygon points="894.042,130.961 899.688,94 901.736,94 896.042,132.84" fill="#000"/>
<polygon points="896.735,119.382 904.697,94 905.61,94 898.735,124.003" fill="#000"/>
<polygon points="916.557,106.668 907.892,81 913.926,81 918.557,113.923" fill="#000"/>
<polygon points="917.869,117.776 910.613,81 914.838,81 919.869,118.758" fill="#000"/>
<polygon points="626,74 630,74 641,100 643,140 639,140 637,104" fill="#000"/>
<polygon points="692,80 689,80 678,110 676,150 679,150 681,112" fill="#000"/>
<polygon points="724,184 738,184 737,150 734,128 753,76 758,76 762,90 744,120 732,122 716,84 714,100 726,130 724,160" fill="#000"/>
<polygon points="730,100 733,100 737,80 734,80" fill="#000"/>
<polygon points="769,92 773,80 785,100 785,108 775,92" fill="#000"/>
<polygon points="800,120 810,89 814,89 803,124" fill="#000"/>
<polygon points="827,112 840,87 844,87 830,118" fill="#000"/>
<polygon points="852,96 847,87 843,87 850,104" fill="#000"/>
<polygon points="865,104 876,80 880,80 868,110" fill="#000"/>
<path d="M97 0h43v16h-43zM129 16h59v16h-59zM177 32h27v16h-27zM193 48h48v16h-48zM342 16h43v16h-43zM326 32h27v16h-27zM305 48h32v32h-32zM257 144h32v32h-32zM289 160h16v32h-16z" fill="url(#td)"/>
<rect x="316" y="53" width="9" height="16" fill="#000"/>
<rect x="266" y="156" width="14" height="20" fill="#000"/>
<path d="M531 15h100v50h-70l-30-10z" fill="url(#l0)"/>
<path d="M639 50h34v76h-34z" fill="url(#l0)"/>
<path d="M566 52h72v72l-8 16h-56l-12-22v-58z" fill="#000"/>
<path d="M600 15h148v40h-148zM672 0h76v132h-70z" fill="#000"/>
<path d="M596 15h76v40h-90z" fill="url(#l3)"/>
<path d="M610 0h138v16h-138z" fill="url(#l3)"/>
<path d="M563 59l10-7h64v70l-8 15h-55l-11-20z" fill="#052c06"/>
<path d="M560 59l12-9h67v74l-8 17h-59l-12-23z" fill="url(#l1)"/>
<path d="M577 66l13-4 22 2 19 2 2 12-15 4-22-2-16 2-6-8z" fill="#0c5012"/><path d="M577 66l13-4 22 2 19 2 2 12-15 4-22-2-16 2-6-8z" fill="url(#l2)"/>
<path d="M676 0h72v130h-58l-14-26z" fill="#052c06"/>
<path d="M672 0h76v138h-60l-16-30z" fill="url(#l1)"/>
<path d="M684 18l16-4 48 2v96l-18 6-18-8-18 6-8-20-6-36 8-20z" fill="#0c5012"/><path d="M684 18l16-4 48 2v96l-18 6-18-8-18 6-8-20-6-36 8-20z" fill="url(#l2)"/>
<rect x="593" y="138" width="16" height="70" fill="url(#tk)"/>
<rect x="674" y="79" width="15" height="129" fill="url(#tk)"/>
<rect x="705" y="118" width="32" height="90" fill="url(#tk)"/>
<path d="M588 128h26v22h-26z" fill="url(#l4)"/>
<path d="M700 112h44v34h-44z" fill="url(#l4)"/>
<path d="M672 70h20v30h-20z" fill="url(#l4)"/>
<path d="M716 92l5-4 6 3 2 8-5 6-5-5z" fill="#20b8e0"/><path d="M727 98l5-1 2 6-4 6z" fill="#803018"/>
<path d="M193 0h48v16h-48zM273 0h16v16h-16zM305 0h96v16h-96zM449 0h48v16h-48zM513 0h96v16h-96zM225 16h32v16h-32zM273 16h16v16h-16zM305 16h16v16h-16zM481 16h16v16h-16zM513 16h16v16h-16zM241 32h16v16h-16zM273 32h48v16h-48zM481 32h48v16h-48zM241 48h16v16h-16zM273 48h16v16h-16zM241 64h48v16h-48zM241 80h32v16h-32zM449 128h32v16h-32zM449 144h32v16h-32zM449 160h32v16h-32zM241 176h32v16h-32zM449 176h32v16h-32zM225 192h96v16h-96zM449 192h32v16h-32zM1 208h256v16h-256zM305 208h176v16h-176zM17 224h32v16h-32zM81 224h80v16h-80zM241 224h16v16h-16zM449 224h32v16h-32z" fill="url(#tb)"/>
<path d="M481 208h272v16h-272zM529 224h16v16h-16zM737 224h16v16h-16z" fill="url(#tg)"/>
<path d="M193 0.5h16M209 0.5h16M225 0.5h16M273 0.5h16M305 0.5h16M321 0.5h16M337 0.5h16M353 0.5h16M369 0.5h16M385 0.5h16M449 0.5h16M465 0.5h16M481 0.5h16M513 0.5h16M529 0.5h16M545 0.5h16M561 0.5h16M577 0.5h16M593 0.5h16M241 16.5h16M289 32.5h16M497 32.5h16M257 64.5h16M449 128.5h16M465 128.5h16M241 176.5h16M257 176.5h16M225 192.5h16M273 192.5h16M289 192.5h16M305 192.5h16M1 208.5h16M17 208.5h16M33 208.5h16M49 208.5h16M65 208.5h16M81 208.5h16M97 208.5h16M113 208.5h16M129 208.5h16M145 208.5h16M161 208.5h16M177 208.5h16M193 208.5h16M209 208.5h16M321 208.5h16M337 208.5h16M353 208.5h16M369 208.5h16M385 208.5h16M401 208.5h16M417 208.5h16M433 208.5h16" stroke="#ffb868" stroke-width="1" stroke-dasharray="5 1 3 1" fill="none"/>
<path d="M240.5 0v16M288.5 0v16M400.5 0v16M496.5 0v16M608.5 0v16M256.5 16v16M288.5 16v16M320.5 16v16M496.5 16v16M528.5 16v16M256.5 32v16M320.5 32v16M528.5 32v16M256.5 48v16M288.5 48v16M288.5 64v16M272.5 80v16M480.5 128v16M480.5 144v16M480.5 160v16M272.5 176v16M480.5 176v16M320.5 192v16M480.5 192v16M256.5 208v16M48.5 224v16M160.5 224v16M256.5 224v16M480.5 224v16" stroke="#ffd840" stroke-width="1" stroke-dasharray="3 1" fill="none"/>
<rect x="97" y="208" width="32" height="32" fill="#78780a"/>
<rect x="97" y="208" width="32" height="2" fill="#ffe890"/>
<rect x="97" y="208" width="2" height="32" fill="#ffe890"/><rect x="127" y="208" width="2" height="32" fill="#ffd860"/>
<path d="M105 240v-18q0-8 10-8" fill="none" stroke="#e8d020" stroke-width="2.500"/>
<path d="M110 240v-14q0-6 6-6" fill="none" stroke="#c8b010" stroke-width="2"/>
<rect x="116" y="227" width="8" height="12" fill="#e8d020"/><path d="M118 238l6-8v8z" fill="#4a4400"/>
<path d="M97 210h32M97 221h32M97 225h32M98 208v32M110 208v32M114 208v32M126 208v32" stroke="#e22a10" stroke-width="1.300" fill="none"/>
<rect x="3" y="195" width="13" height="8" fill="#8a8a20"/><rect x="5" y="197" width="9" height="1" fill="#3a3a00"/><rect x="5" y="200" width="9" height="1" fill="#3a3a00"/><rect x="9" y="203" width="2" height="5" fill="#8a7a20"/><rect x="9" y="193" width="2" height="2" fill="#f0e0c0"/><rect x="3" y="194" width="2" height="3" fill="#804018"/><rect x="14" y="194" width="2" height="3" fill="#804018"/>
<rect x="163" y="195" width="13" height="8" fill="#8a8a20"/><rect x="165" y="197" width="9" height="1" fill="#3a3a00"/><rect x="165" y="200" width="9" height="1" fill="#3a3a00"/><rect x="169" y="203" width="2" height="5" fill="#8a7a20"/><rect x="169" y="193" width="2" height="2" fill="#f0e0c0"/><rect x="163" y="194" width="2" height="3" fill="#804018"/><rect x="174" y="194" width="2" height="3" fill="#804018"/>
<rect x="403" y="195" width="13" height="8" fill="#8a8a20"/><rect x="405" y="197" width="9" height="1" fill="#3a3a00"/><rect x="405" y="200" width="9" height="1" fill="#3a3a00"/><rect x="409" y="203" width="2" height="5" fill="#8a7a20"/><rect x="409" y="193" width="2" height="2" fill="#f0e0c0"/><rect x="403" y="194" width="2" height="3" fill="#804018"/><rect x="414" y="194" width="2" height="3" fill="#804018"/>
<path d="M51.5 208L49.1 200.3L56 208zM53.5 208L53.7 194.7L58 208zM55 208L57.3 199.6L59.5 208zM56.5 208L60.6 194L61 208zM58 208L64.5 198.2L62.5 208z" fill="#005800"/>
<path d="M195.5 208L193.1 194.8L200 208zM197.5 208L197.7 185.2L202 208zM199 208L201.3 193.6L203.5 208zM200.5 208L204.6 184L205 208zM202 208L208.5 191.2L206.5 208z" fill="#006000"/>
<path d="M580.5 208L578.1 200.85L585 208zM582.5 208L582.7 195.65L587 208zM584 208L586.3 200.2L588.5 208zM585.5 208L589.6 195L590 208zM587 208L593.5 198.9L591.5 208z" fill="#006400"/>
<path d="M644.5 208L642.1 194.8L649 208zM646.5 208L646.7 185.2L651 208zM648 208L650.3 193.6L652.5 208zM649.5 208L653.6 184L654 208zM651 208L657.5 191.2L655.5 208z" fill="#006400"/>
<path d="M536 173q0-17 12-17q13 0 13 17v8q0 9-6 11v13h3v4h-19v-4h3v-13q-6-2-6-11z" fill="#d8b010" stroke="#e87820" stroke-width="1.200"/>
<path d="M542 159h13M539 162h19M538 165h21M537 168h23M537 171h23" stroke="#fff8d0" stroke-width="1"/>
<path d="M541 164h15v16l-3 8h-9l-3-8z" fill="#0c0a00"/>
<path d="M545 165h7v9l-2 4h-3l-2-4z" fill="#c8a008"/>
<path d="M546 169h5M546 173h5" stroke="#0c0a00" stroke-width="1"/>
<path d="M547 179h3v5h-3z" fill="#e8c820"/>
<path d="M538 175h4v10h-4zM555 175h4v10h-4z" fill="#e8d060"/>
<path d="M538 177h4M538 180h4M538 183h4M555 177h4M555 180h4M555 183h4" stroke="#fff8d0" stroke-width="1"/>
<path d="M540 187h17" stroke="#208020" stroke-width="1.500"/>
<path d="M544 193h3v13h-3z" fill="#fff0a0"/><path d="M548 193h2v13h-2z" fill="#201800"/><path d="M551 193h2v13h-2z" fill="#806000"/>
<rect x="0" y="-1" width="31" height="2" fill="#ff5a5a"/>
<path d="M33 -.3h715" stroke="#f0a060" stroke-width="1.400" stroke-dasharray="6 4"/>
<path d="M0 240h748" stroke="#f08050" stroke-width="1" stroke-dasharray="10 5"/>
<rect x="30.500" y="0" width="1.500" height="240" fill="#e02828"/>
<path d="M33.5 0v240" stroke="#ffb070" stroke-width="1.300" stroke-dasharray="7 3"/>
<path d="M353.5 0v240" stroke="#ffb070" stroke-width="1.300" stroke-dasharray="7 3"/>
<path d="M673.5 0v240" stroke="#ffb070" stroke-width="1.300" stroke-dasharray="7 3"/>
</svg><div class="a" style="left:1131px;top:33px;width:469px;height:783px;background:linear-gradient(#5b5b5b 0,#5a5a5a 4%,#444 100%)"></div>
<div class="a" style="left:1131px;top:33px;width:469px;height:32px;background:#333"></div>
<div class="t" style="left:1133px;top:34px;font-size:14px;color:#e6e6e6">判定キノコ_3（テキスト表示</div>
<div class="t" style="left:1132px;top:70px">元になったオブジェクト:</div>
<div class="a" style="left:1287px;top:69px;width:176px;height:22px;background:#3c3c3c;border:1px solid #0a0a0a;font-size:13px;line-height:20px;white-space:nowrap;overflow:hidden;color:#f0f0f0">判定キノコ_3（テキスト表示</div>
<div class="a" style="left:1467px;top:70px;width:54px;height:26px;background:linear-gradient(#fff,#e2e2e2);border:1px solid #d0d0d0;border-radius:2px;color:#111;font-size:13px;line-height:25px;text-align:center">更新</div>
<div class="t" style="left:1132px;top:102px">表示優先度：</div>
<div class="sp" style="left:1217px;top:100px"><i>0</i><b class="l"></b><b class="r"></b></div>
<svg class="a" style="left:1132px;top:129px" width="11" height="12" viewBox="0 0 11 12"><rect x=".5" y=".5" width="10" height="11" fill="#e8e8e8" stroke="#bbb"/><path d="M2.500 6l2.500 3 4-7" fill="none" stroke="#444" stroke-width="1.500"/></svg>
<div class="t" style="left:1147px;top:125px;color:#858585">単体の対象</div>
<div class="a" style="left:1215px;top:126px;width:160px;height:22px;background:#333;font-size:13px;line-height:22px;white-space:nowrap;overflow:hidden;color:#f0f0f0;padding-left:2px">判定キノコ_3（テキス<span class="cj">…</span></div>
<div class="t" style="left:1132px;top:153px">出現時のアクション:</div>
<div class="dd" style="left:1261px;top:152px;width:260px;height:25px;line-height:25px;padding-left:10px">オブジェクトの初期アクション<u style="right:6px"></u></div>
<div class="a" style="left:1132px;top:185px;width:10px;height:11px;background:#fff"></div>
<div class="t" style="left:1146px;top:180px">初期表示方向を設定</div>
<div class="a" style="left:1267px;top:181px;width:50px;height:50px;border-radius:25px;background:#6c6c6c"></div>
<div class="a" style="left:1267px;top:203px;width:25px;height:3px;background:#464646"></div>
<div class="sp" style="left:1321px;top:181px;background:#4a4a4a;color:#787878"><i>270.00</i><b class="l"></b><b class="r"></b></div>
<div class="t" style="left:1132px;top:237px">※「更新」を押すと元になったオブジェクトの設定が反映されます。</div>
<div class="t" style="left:1157px;top:255px">シーンに配置してからの表示の設定以外は初期化されます。</div>
<div class="hl" style="top:281px"></div>
<i class="tri" style="top:297px"></i><div class="sec" style="top:291px">表示の設定</div>
<div class="t" style="left:1132px;top:320px">初期位置:</div>
<div class="t" style="left:1217px;top:320px;font-size:14px">X</div>
<div class="sp" style="left:1233px;top:319px"><i>696</i><b class="l"></b><b class="r"></b></div>
<div class="t" style="left:1349px;top:320px;font-size:14px">Y</div>
<div class="sp" style="left:1366px;top:319px"><i>192</i><b class="l"></b><b class="r"></b></div>
<div class="t" style="left:1132px;top:347px">配置レイヤー:</div>
<div class="dd" style="left:1242px;top:345px;width:100px;height:25px;line-height:25px;padding-left:11px">レイヤー2<u style="right:5px"></u></div>
<div class="t" style="left:1132px;top:376px">スケール(%):</div>
<div class="t" style="left:1236px;top:375px;font-size:14px">X</div>
<div class="sp" style="left:1252px;top:374px"><i>100.00</i><b class="l"></b><b class="r"></b></div>
<div class="t" style="left:1369px;top:375px;font-size:14px">Y</div>
<div class="sp" style="left:1385px;top:374px"><i>100.00</i><b class="l"></b><b class="r"></b></div>
<div class="t" style="left:1132px;top:401px">回転:</div>
<div class="a" style="left:1170px;top:400px;width:50px;height:50px;border-radius:25px;background:#808080"></div>
<div class="a" style="left:1195px;top:400px;width:3px;height:25px;background:#000"></div>
<div class="sp" style="left:1224px;top:400px"><i>0.00</i><b class="l"></b><b class="r"></b></div>
<div class="hl" style="top:455px"></div>
<i class="tri" style="top:472px"></i><div class="sec" style="top:466px;width:210px;overflow:hidden">配置後も変更可能な実行アクション</div>
<div class="a" style="left:1368px;top:466px;width:200px;height:24px;background:#333;color:#b4b4b4;font-size:13px;line-height:25px;padding-left:3px;white-space:nowrap">アクションで絞込み</div>
<div class="hl" style="top:495px"></div>
<i class="tri" style="top:512px"></i><div class="sec" style="top:506px">沿わせるコースを選択</div>
<div class="t" style="left:1132px;top:535px">コース:</div>
<div class="dd" style="left:1183px;top:534px;width:160px;height:26px;line-height:27px;padding-left:9px;border-radius:3px">(指定しない)<u style="right:9px"></u></div>
<div class="t" style="left:1132px;top:567px">開始ポイント：</div>
<div class="dd" style="left:1230px;top:565px;width:100px;height:25px;background:#343434"><u style="right:6px;border-top-color:#262626"></u></div></body></html>
